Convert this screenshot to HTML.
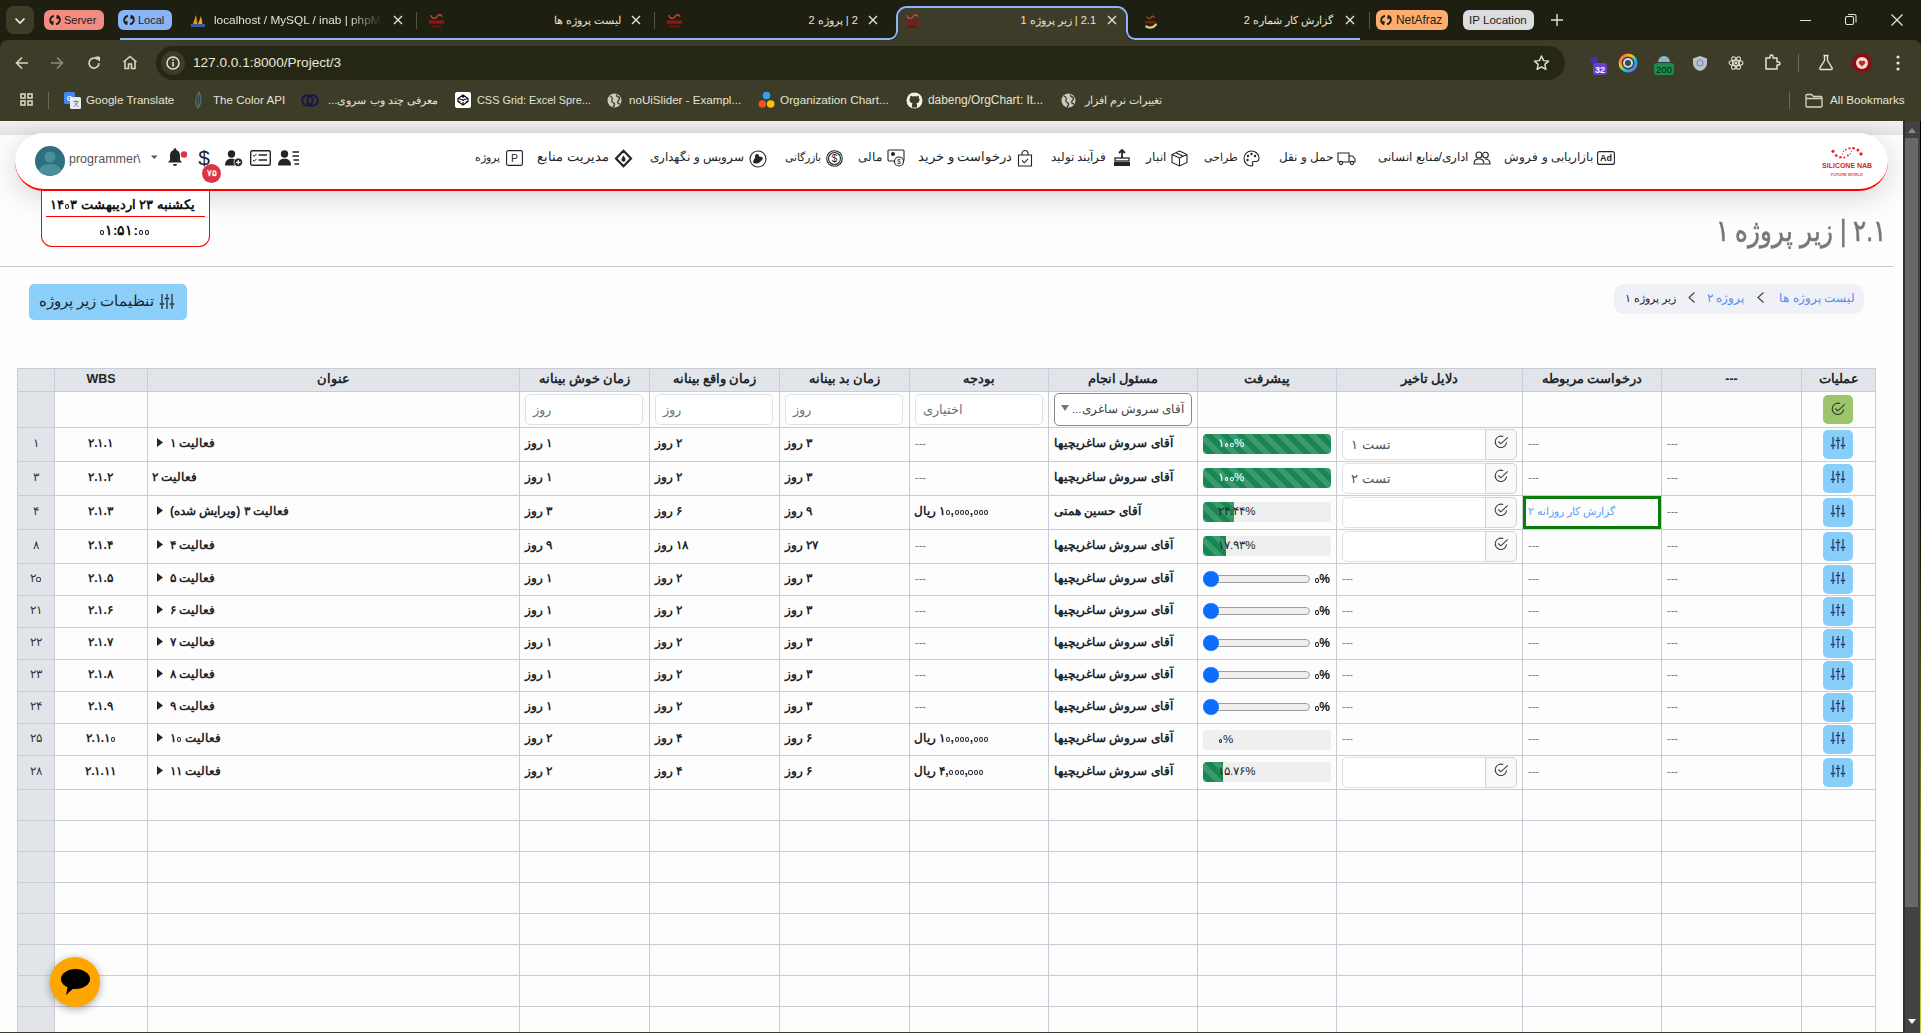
<!DOCTYPE html><html><head><meta charset="utf-8"><style>
*{box-sizing:border-box;margin:0;padding:0}
html,body{width:1921px;height:1033px;overflow:hidden;background:#fdfdfd;font-family:"Liberation Sans",sans-serif;position:relative}
.ab{position:absolute}
.t{position:absolute;white-space:nowrap;line-height:1}
.rtl{direction:rtl;unicode-bidi:plaintext}
svg{position:absolute;overflow:visible}
</style></head><body>
<div class="ab" style="left:0px;top:0px;width:1921px;height:48px;background:#1f1f11"></div>
<div class="ab" style="left:6px;top:6px;width:28px;height:28px;background:#3c3c29;border-radius:8px"></div>
<svg style="left:14px;top:17px" width="12" height="8"><path d="M1.5 1.5L6 6L10.5 1.5" fill="none" stroke="#f0f0e0" stroke-width="1.6"/></svg>
<div class="ab" style="left:44px;top:10px;width:60px;height:20px;background:#f28b82;border-radius:6px"></div>
<svg style="left:49px;top:14px" width="12" height="12"><path d="M5 1.8A4.5 4.5 0 0 0 3.2 10M7 10.2A4.5 4.5 0 0 0 8.8 2" fill="none" stroke="#1f1f11" stroke-width="1.8"/><path d="M1.5 8.2L3.8 10.8L4.2 7.5Z M10.5 3.8L8.2 1.2L7.8 4.5Z" fill="#1f1f11" stroke="#1f1f11" stroke-width="1"/></svg>
<div class="ab" style="left:64px;top:10px;height:20px;line-height:20px;font-size:11px;color:#1f1f11;white-space:nowrap;"><span>Server</span></div>
<div class="ab" style="left:118px;top:10px;width:54px;height:20px;background:#8ab4f8;border-radius:6px"></div>
<svg style="left:123px;top:14px" width="12" height="12"><path d="M5 1.8A4.5 4.5 0 0 0 3.2 10M7 10.2A4.5 4.5 0 0 0 8.8 2" fill="none" stroke="#1f1f11" stroke-width="1.8"/><path d="M1.5 8.2L3.8 10.8L4.2 7.5Z M10.5 3.8L8.2 1.2L7.8 4.5Z" fill="#1f1f11" stroke="#1f1f11" stroke-width="1"/></svg>
<div class="ab" style="left:138px;top:10px;height:20px;line-height:20px;font-size:11px;color:#1f1f11;white-space:nowrap;"><span>Local</span></div>
<div class="ab" style="left:120px;top:38px;width:770px;height:2px;background:#8ab4f8"></div>
<svg style="left:190px;top:13px" width="16" height="15"><path d="M2 14L6 2L8 14Z" fill="#f29111"/><path d="M7 14L11 3L13 14Z" fill="#f6a623"/><path d="M1 11H15V14H1Z" fill="#3b5a9c"/></svg>
<div class="ab" style="left:214px;top:10px;width:168px;height:20px;overflow:hidden;-webkit-mask-image:linear-gradient(90deg,#000 80%,transparent)"><div style="font-size:11.8px;line-height:20px;color:#e4e4d4;white-space:nowrap">localhost / MySQL / inab | phpMyAdmin</div></div>
<svg style="left:393px;top:15px" width="10" height="10"><path d="M1 1L9 9M9 1L1 9" stroke="#e4e4d4" stroke-width="1.4"/></svg>
<div class="ab" style="left:416px;top:12px;width:1px;height:17px;background:#55553f"></div>
<svg style="left:427px;top:11px" width="18" height="18"><path d="M3.8 4.2C4.5 7.5 8 8.5 9.8 5.8C11.2 3.5 13.5 2.5 15.2 5.8" fill="none" stroke="#c24a3a" stroke-width="1.4"/><rect x="1.8" y="9.4" width="15.4" height="3.3" fill="#8e1515"/><rect x="4.5" y="14.6" width="10" height="2" fill="#6e1212"/></svg>
<div class="ab" style="right:1300px;top:10px;height:20px;line-height:20px;font-size:11.2px;color:#e4e4d4;white-space:nowrap;direction:rtl;">لیست پروژه ها</div>
<svg style="left:631px;top:15px" width="10" height="10"><path d="M1 1L9 9M9 1L1 9" stroke="#e4e4d4" stroke-width="1.4"/></svg>
<div class="ab" style="left:654px;top:12px;width:1px;height:17px;background:#55553f"></div>
<svg style="left:665px;top:11px" width="18" height="18"><path d="M3.8 4.2C4.5 7.5 8 8.5 9.8 5.8C11.2 3.5 13.5 2.5 15.2 5.8" fill="none" stroke="#c24a3a" stroke-width="1.4"/><rect x="1.8" y="9.4" width="15.4" height="3.3" fill="#8e1515"/><rect x="4.5" y="14.6" width="10" height="2" fill="#6e1212"/></svg>
<div class="ab" style="right:1063px;top:10px;height:20px;line-height:20px;font-size:11.1px;color:#e4e4d4;white-space:nowrap;direction:rtl;">2 | پروژه 2</div>
<svg style="left:868px;top:15px" width="10" height="10"><path d="M1 1L9 9M9 1L1 9" stroke="#e4e4d4" stroke-width="1.4"/></svg>
<svg style="left:860px;top:0" width="520" height="48"><path d="M29 48V40H37A8 8 0 0 0 37 40Z" fill="none"/><path d="M20 39H29A8 8 0 0 0 37 31V17A10 10 0 0 1 47 7H257A10 10 0 0 1 267 17V31A8 8 0 0 0 275 39H500" fill="none" stroke="#8ab4f8" stroke-width="2"/><path d="M38 17A9 9 0 0 1 47 8H257A9 9 0 0 1 266 17V32A8 8 0 0 0 274 40H30A8 8 0 0 0 38 32Z" fill="#3c3c29"/></svg>
<svg style="left:903px;top:11px" width="18" height="18"><path d="M3.8 4.2C4.5 7.5 8 8.5 9.8 5.8C11.2 3.5 13.5 2.5 15.2 5.8" fill="none" stroke="#c24a3a" stroke-width="1.4"/><rect x="1.8" y="9.4" width="15.4" height="3.3" fill="#8e1515"/><rect x="4.5" y="14.6" width="10" height="2" fill="#6e1212"/></svg>
<div class="ab" style="right:825px;top:10px;height:20px;line-height:20px;font-size:11px;color:#e4e4d4;white-space:nowrap;direction:rtl;">2.1 | زیر پروژه 1</div>
<svg style="left:1107px;top:15px" width="10" height="10"><path d="M1 1L9 9M9 1L1 9" stroke="#e4e4d4" stroke-width="1.4"/></svg>
<svg style="left:1144px;top:13px" width="14" height="16"><path d="M3 3.5C3.5 6 6 6.5 7 4.5C8 2.5 9.5 2.5 10.5 5" fill="none" stroke="#a8503a" stroke-width="1.2"/><rect x="1" y="8" width="10" height="2.5" fill="#8e1515"/><path d="M2.3 13.5C5 15 9 15 12 11.5" fill="none" stroke="#cfd47a" stroke-width="2.2" stroke-linecap="round"/></svg>
<div class="ab" style="right:588px;top:10px;height:20px;line-height:20px;font-size:10.9px;color:#e4e4d4;white-space:nowrap;direction:rtl;">گزارش کار شماره 2</div>
<svg style="left:1345px;top:15px" width="10" height="10"><path d="M1 1L9 9M9 1L1 9" stroke="#e4e4d4" stroke-width="1.4"/></svg>
<div class="ab" style="left:1369px;top:12px;width:1px;height:17px;background:#55553f"></div>
<div class="ab" style="left:1376px;top:10px;width:72px;height:20px;background:#fcad70;border-radius:6px"></div>
<svg style="left:1380px;top:14px" width="12" height="12"><path d="M5 1.8A4.5 4.5 0 0 0 3.2 10M7 10.2A4.5 4.5 0 0 0 8.8 2" fill="none" stroke="#1f1f11" stroke-width="1.8"/><path d="M1.5 8.2L3.8 10.8L4.2 7.5Z M10.5 3.8L8.2 1.2L7.8 4.5Z" fill="#1f1f11" stroke="#1f1f11" stroke-width="1"/></svg>
<div class="ab" style="left:1396px;top:10px;height:20px;line-height:20px;font-size:11.9px;color:#1f1f11;white-space:nowrap;"><span>NetAfraz</span></div>
<div class="ab" style="left:1463px;top:10px;width:71px;height:20px;background:#dadce0;border-radius:6px"></div>
<div class="ab" style="left:1469px;top:10px;height:20px;line-height:20px;font-size:11.6px;color:#1f1f11;white-space:nowrap;"><span>IP Location</span></div>
<svg style="left:1551px;top:14px" width="12" height="12"><path d="M6 0V12M0 6H12" stroke="#e4e4d4" stroke-width="1.4"/></svg>
<div class="ab" style="left:1800px;top:20px;width:11px;height:1px;background:#e4e4d4"></div>
<svg style="left:1845px;top:14px" width="12" height="12"><rect x="0.5" y="2.5" width="8" height="8" rx="1.5" fill="none" stroke="#e4e4d4" stroke-width="1.1"/><path d="M3 0.5H9.5A1.5 1.5 0 0 1 11 2V8.5" fill="none" stroke="#e4e4d4" stroke-width="1.1"/></svg>
<svg style="left:1891px;top:14px" width="12" height="12"><path d="M0.5 0.5L11.5 11.5M11.5 0.5L0.5 11.5" stroke="#e4e4d4" stroke-width="1.3"/></svg>
<div class="ab" style="left:0px;top:40px;width:1921px;height:81px;background:#3c3c29;border-radius:8px 8px 0 0"></div>
<svg style="left:15px;top:56px" width="14" height="14"><path d="M13 7H2M7 1.5L1.5 7L7 12.5" fill="none" stroke="#d6d6c0" stroke-width="1.6"/></svg>
<svg style="left:50px;top:56px" width="14" height="14"><path d="M1 7H12M7 1.5L12.5 7L7 12.5" fill="none" stroke="#8c8c78" stroke-width="1.6"/></svg>
<svg style="left:87px;top:56px" width="14" height="14"><path d="M12 7A5 5 0 1 1 10.3 3.3" fill="none" stroke="#d6d6c0" stroke-width="1.6"/><path d="M8.5 1H12.5V5Z" fill="#d6d6c0" stroke="#d6d6c0" stroke-width="1"/></svg>
<svg style="left:122px;top:55px" width="16" height="15"><path d="M1.5 7L8 1.5L14.5 7M3 6V13.5H6.5V9H9.5V13.5H13V6" fill="none" stroke="#d6d6c0" stroke-width="1.6"/></svg>
<div class="ab" style="left:156px;top:46px;width:1409px;height:34px;background:#262615;border-radius:17px"></div>
<div class="ab" style="left:161px;top:51px;width:24px;height:24px;border-radius:12px;background:#3c3c29"></div>
<svg style="left:166px;top:56px" width="14" height="14"><circle cx="7" cy="7" r="6" fill="none" stroke="#e4e4d4" stroke-width="1.5"/><path d="M7 6V10.5" stroke="#e4e4d4" stroke-width="1.6"/><circle cx="7" cy="4" r="0.9" fill="#e4e4d4"/></svg>
<div class="ab" style="left:193px;top:53px;height:20px;line-height:20px;font-size:13.6px;color:#e8e8d8;white-space:nowrap;"><span>127.0.0.1:8000/Project/3</span></div>
<svg style="left:1533px;top:55px" width="17" height="16"><path d="M8.5 1L10.6 5.6L15.6 6.1L11.8 9.4L12.9 14.4L8.5 11.8L4.1 14.4L5.2 9.4L1.4 6.1L6.4 5.6Z" fill="none" stroke="#e4e4d4" stroke-width="1.4" stroke-linejoin="round"/></svg>
<svg style="left:1587px;top:55px" width="20" height="22"><path d="M2 6L8 1L12 6L8 10Z" fill="#4b2fa8"/><rect x="6" y="8" width="14" height="12" rx="3" fill="#6b3fd0"/><text x="13" y="18" font-size="9" font-family="Liberation Sans" font-weight="bold" fill="#fff" text-anchor="middle">32</text></svg>
<svg style="left:1619px;top:54px" width="18" height="18"><circle cx="9" cy="9" r="8" fill="none" stroke="url(#rb)" stroke-width="3"/><defs><linearGradient id="rb" x1="0" y1="0" x2="1" y2="1"><stop offset="0" stop-color="#ff3d7f"/><stop offset=".35" stop-color="#ffc107"/><stop offset=".65" stop-color="#00c3ff"/><stop offset="1" stop-color="#a24bff"/></linearGradient></defs><circle cx="9" cy="9" r="5" fill="#cfd8dc"/><circle cx="9" cy="9" r="3" fill="#37474f"/></svg>
<svg style="left:1653px;top:54px" width="22" height="22"><path d="M5 8A6 6 0 0 1 17 8Z" fill="#7bbcd0"/><rect x="1" y="9" width="20" height="12" rx="3" fill="#1d8a4a"/><text x="11" y="19" font-size="9.5" font-family="Liberation Sans" fill="#0b2414" text-anchor="middle">200</text></svg>
<svg style="left:1692px;top:55px" width="16" height="17"><path d="M8 1L15 3.5V8C15 12 12 15 8 16C4 15 1 12 1 8V3.5Z" fill="#b9c3cf"/><circle cx="8" cy="8" r="3" fill="none" stroke="#7c8ea0" stroke-width="1.2"/></svg>
<svg style="left:1728px;top:55px" width="16" height="16"><g fill="none" stroke="#e4e4d4" stroke-width="1.1"><ellipse cx="8" cy="8" rx="7" ry="2.7"/><ellipse cx="8" cy="8" rx="7" ry="2.7" transform="rotate(60 8 8)"/><ellipse cx="8" cy="8" rx="7" ry="2.7" transform="rotate(120 8 8)"/></g><circle cx="8" cy="8" r="1.4" fill="#e4e4d4"/></svg>
<svg style="left:1764px;top:54px" width="17" height="17"><path d="M2 4H6V2.5A1.5 1.5 0 0 1 9 2.5V4H13V8H14.5A1.5 1.5 0 0 1 14.5 11H13V15H2Z" fill="none" stroke="#e4e4d4" stroke-width="1.5" stroke-linejoin="round"/></svg>
<div class="ab" style="left:1798px;top:54px;width:1px;height:18px;background:#6a6a55"></div>
<svg style="left:1818px;top:54px" width="16" height="17"><path d="M5.5 1.5H10.5M6.5 1.5V6.5L1.8 14.2A1 1 0 0 0 2.7 15.5H13.3A1 1 0 0 0 14.2 14.2L9.5 6.5V1.5" fill="none" stroke="#e4e4d4" stroke-width="1.4" stroke-linejoin="round"/></svg>
<div class="ab" style="left:1852px;top:53px;width:20px;height:20px;border-radius:50%;background:#8a1010"></div>
<div class="ab" style="left:1856px;top:57px;width:12px;height:12px;border-radius:50%;background:#f4dada"></div>
<svg style="left:1858px;top:60px" width="8" height="7"><path d="M4 6.5L1 3.5A1.6 1.6 0 0 1 4 1.5A1.6 1.6 0 0 1 7 3.5Z" fill="#c62828"/></svg>
<svg style="left:1896px;top:55px" width="4" height="16"><circle cx="2" cy="2" r="1.6" fill="#e4e4d4"/><circle cx="2" cy="8" r="1.6" fill="#e4e4d4"/><circle cx="2" cy="14" r="1.6" fill="#e4e4d4"/></svg>
<svg style="left:20px;top:93px" width="13" height="13"><g fill="none" stroke="#d6d6c0" stroke-width="1.6"><rect x="1" y="1" width="4" height="4"/><rect x="8" y="1" width="4" height="4"/><rect x="1" y="8" width="4" height="4"/><rect x="8" y="8" width="4" height="4"/></g></svg>
<div class="ab" style="left:48px;top:92px;width:1px;height:17px;background:#6a6a55"></div>
<svg style="left:64px;top:92px" width="17" height="17"><rect x="0" y="0" width="11" height="12" rx="1.5" fill="#4285f4"/><rect x="6" y="5" width="11" height="12" rx="1.5" fill="#e8eaed"/><text x="5.5" y="9" font-size="7" font-family="Liberation Sans" font-weight="bold" fill="#fff" text-anchor="middle">G</text><path d="M9.5 9.5H14.5M12 8.5V10M10 14.5C12 13 13 11.5 13.5 10M11 11C11.5 12.5 13 14 14.5 14.5" fill="none" stroke="#777" stroke-width="0.9"/></svg>
<div class="ab" style="left:86px;top:90px;height:20px;line-height:20px;font-size:11.6px;color:#e4e4d4;white-space:nowrap;"><span>Google Translate</span></div>
<svg style="left:194px;top:91px" width="10" height="18"><path d="M5 1C1 7 1 13 4 17C7 13 8 7 5 1Z" fill="none" stroke="#3f7f5a" stroke-width="1.2"/><path d="M5 1L4 17" stroke="#7b4fa0" stroke-width="0.8"/></svg>
<div class="ab" style="left:213px;top:90px;height:20px;line-height:20px;font-size:11.6px;color:#e4e4d4;white-space:nowrap;"><span>The Color API</span></div>
<svg style="left:301px;top:92px" width="18" height="17"><circle cx="6.5" cy="8.5" r="5.2" fill="none" stroke="#18154a" stroke-width="2"/><circle cx="11.5" cy="8.5" r="5.2" fill="none" stroke="#18154a" stroke-width="2"/></svg>
<div class="ab" style="right:1483px;top:90px;height:20px;line-height:20px;font-size:11.4px;color:#e4e4d4;white-space:nowrap;direction:rtl;">معرفی چند وب سروی...</div>
<div class="ab" style="left:455px;top:92px;width:16px;height:16px;background:#fff;border-radius:2px"></div>
<svg style="left:457px;top:94px" width="12" height="12"><path d="M6 1L11 4.5V7.5L6 11L1 7.5V4.5Z M1 4.5L11 7.5 M11 4.5L1 7.5 M6 1V4 M6 8V11" fill="none" stroke="#111" stroke-width="1.2"/></svg>
<div class="ab" style="left:477px;top:90px;height:20px;line-height:20px;font-size:10.9px;color:#e4e4d4;white-space:nowrap;"><span>CSS Grid: Excel Spre...</span></div>
<svg style="left:607px;top:93px" width="15" height="15"><circle cx="7.5" cy="7.5" r="7" fill="#c9c9c0"/><path d="M3 3C5 4 6 5 5 7C4 8 6 10 7 10C8 11 7 13 6 14M10 1.5C9 3 10 4 12 4C13 5 12 7 11 8C10 9 11 11 13 11" fill="none" stroke="#3c3c29" stroke-width="1.3"/></svg>
<div class="ab" style="left:629px;top:90px;height:20px;line-height:20px;font-size:11.6px;color:#e4e4d4;white-space:nowrap;"><span>noUiSlider - Exampl...</span></div>
<svg style="left:758px;top:91px" width="17" height="18"><circle cx="8.5" cy="4.5" r="3.8" fill="#2aa4f4"/><circle cx="4.3" cy="13" r="3.8" fill="#f4511e"/><circle cx="12.7" cy="13" r="3.8" fill="#ffc107"/></svg>
<div class="ab" style="left:780px;top:90px;height:20px;line-height:20px;font-size:11.8px;color:#e4e4d4;white-space:nowrap;"><span>Organization Chart...</span></div>
<svg style="left:906px;top:92px" width="17" height="17"><circle cx="8.5" cy="8.5" r="8" fill="#f0f0e8"/><path d="M6 15.5V12.8C6 12 6.3 11.5 6.6 11.2C4.5 11 3.5 9.8 3.5 7.8C3.5 7 3.8 6.3 4.3 5.8C4.1 5.2 4.1 4.5 4.4 3.8C5.1 3.8 5.8 4.1 6.5 4.6C7.8 4.2 9.2 4.2 10.5 4.6C11.2 4.1 11.9 3.8 12.6 3.8C12.9 4.5 12.9 5.2 12.7 5.8C13.2 6.3 13.5 7 13.5 7.8C13.5 9.8 12.5 11 10.4 11.2C10.8 11.6 11 12.2 11 12.9V15.5Z" fill="#3c3c29"/></svg>
<div class="ab" style="left:928px;top:90px;height:20px;line-height:20px;font-size:11.9px;color:#e4e4d4;white-space:nowrap;"><span>dabeng/OrgChart: It...</span></div>
<svg style="left:1061px;top:93px" width="15" height="15"><circle cx="7.5" cy="7.5" r="7" fill="#c9c9c0"/><path d="M3 3C5 4 6 5 5 7C4 8 6 10 7 10C8 11 7 13 6 14M10 1.5C9 3 10 4 12 4C13 5 12 7 11 8C10 9 11 11 13 11" fill="none" stroke="#3c3c29" stroke-width="1.3"/></svg>
<div class="ab" style="right:759px;top:90px;height:20px;line-height:20px;font-size:11px;color:#e4e4d4;white-space:nowrap;direction:rtl;">تغییرات نرم افزار</div>
<div class="ab" style="left:1789px;top:92px;width:1px;height:17px;background:#6a6a55"></div>
<svg style="left:1805px;top:93px" width="18" height="15"><path d="M1 2.5A1 1 0 0 1 2 1.5H6.5L8.5 3.5H16A1 1 0 0 1 17 4.5V13A1 1 0 0 1 16 14H2A1 1 0 0 1 1 13Z M1 5.5H17" fill="none" stroke="#d6d6c0" stroke-width="1.3"/></svg>
<div class="ab" style="left:1830px;top:90px;height:20px;line-height:20px;font-size:11.7px;color:#e4e4d4;white-space:nowrap;"><span>All Bookmarks</span></div>
<div class="ab" style="left:0;top:121px;width:1903px;height:14px;background:linear-gradient(#f1f1f1,#e3e3e3)"></div>
<div class="ab" style="left:15px;top:133px;width:1873px;height:58px;background:#fff;border-radius:30px;border-bottom:2px solid #f00;box-shadow:0 6px 28px rgba(0,0,0,.16)"></div>
<svg style="left:1818px;top:140px" width="58" height="40"><g fill="#e0262b"><circle cx="15.0" cy="11.3" r="1.6"/><circle cx="18.2" cy="15.6" r="1.4"/><circle cx="22.3" cy="17.2" r="1.2"/><circle cx="26.4" cy="17.4" r="1.0"/><circle cx="29.9" cy="15.6" r="1.0"/><circle cx="32.2" cy="13.7" r="0.7"/><circle cx="33.4" cy="11.3" r="0.6"/><circle cx="24.4" cy="14.0" r="0.6"/><circle cx="25.6" cy="11.3" r="0.7"/><circle cx="27.9" cy="9.6" r="0.9"/><circle cx="31.5" cy="8.4" r="1.1"/><circle cx="35.6" cy="8.2" r="1.3"/><circle cx="39.9" cy="10.0" r="1.5"/><circle cx="43.0" cy="13.9" r="1.7"/></g><text x="4.1" y="28" textLength="50" lengthAdjust="spacingAndGlyphs" font-family="Liberation Sans" font-weight="bold" font-size="6.9" fill="#d9232a">SILICONE NAB</text><text x="13" y="35.7" textLength="31.7" lengthAdjust="spacingAndGlyphs" font-family="Liberation Sans" font-weight="bold" font-size="4.4" fill="#e04a4f">FUTURE WORLD</text></svg>
<div class="ab" style="right:328px;top:147px;height:20px;line-height:20px;font-size:11.8px;color:#212529;font-weight:normal;white-space:nowrap;direction:rtl;">بازاریابی و فروش</div>
<div class="ab" style="right:453px;top:147px;height:20px;line-height:20px;font-size:12.3px;color:#212529;font-weight:normal;white-space:nowrap;direction:rtl;">اداری/منابع انسانی</div>
<div class="ab" style="right:588px;top:147px;height:20px;line-height:20px;font-size:12.2px;color:#212529;font-weight:normal;white-space:nowrap;direction:rtl;">حمل و نقل</div>
<div class="ab" style="right:683px;top:147px;height:20px;line-height:20px;font-size:11.4px;color:#212529;font-weight:normal;white-space:nowrap;direction:rtl;">طراحی</div>
<div class="ab" style="right:755px;top:147px;height:20px;line-height:20px;font-size:11.8px;color:#212529;font-weight:normal;white-space:nowrap;direction:rtl;">انبار</div>
<div class="ab" style="right:815px;top:147px;height:20px;line-height:20px;font-size:12px;color:#212529;font-weight:normal;white-space:nowrap;direction:rtl;">فرآیند تولید</div>
<div class="ab" style="right:909px;top:147px;height:20px;line-height:20px;font-size:12.5px;color:#212529;font-weight:normal;white-space:nowrap;direction:rtl;">درخواست و خرید</div>
<div class="ab" style="right:1039px;top:147px;height:20px;line-height:20px;font-size:11.5px;color:#212529;font-weight:normal;white-space:nowrap;direction:rtl;">مالی</div>
<div class="ab" style="right:1100px;top:147px;height:20px;line-height:20px;font-size:11px;color:#212529;font-weight:normal;white-space:nowrap;direction:rtl;">بازرگانی</div>
<div class="ab" style="right:1177px;top:147px;height:20px;line-height:20px;font-size:12.2px;color:#212529;font-weight:normal;white-space:nowrap;direction:rtl;">سرویس و نگهداری</div>
<div class="ab" style="right:1312px;top:147px;height:20px;line-height:20px;font-size:12.9px;color:#212529;font-weight:normal;white-space:nowrap;direction:rtl;">مدیریت منابع</div>
<div class="ab" style="right:1421px;top:147px;height:20px;line-height:20px;font-size:10.8px;color:#212529;font-weight:normal;white-space:nowrap;direction:rtl;">پروژه</div>
<svg style="left:1597px;top:151px" width="18" height="14"><rect x="0.6" y="0.6" width="16.8" height="12.8" rx="2" fill="none" stroke="#212529" stroke-width="1.1"/><text x="9" y="10.3" font-family="Liberation Sans" font-size="9" font-weight="bold" fill="#212529" text-anchor="middle">Ad</text></svg>
<svg style="left:1473px;top:151px" width="18" height="14"><circle cx="6" cy="4" r="3" fill="none" stroke="#212529" stroke-width="1.1"/><path d="M1 13C1 9 3 8 6 8C9 8 11 9 11 13Z" fill="none" stroke="#212529" stroke-width="1.1"/><circle cx="12.5" cy="4" r="2.8" fill="none" stroke="#212529" stroke-width="1.1"/><path d="M12 8C15 8 17 9 17 13H12" fill="none" stroke="#212529" stroke-width="1.1"/></svg>
<svg style="left:1337px;top:151px" width="19" height="14"><path d="M1 2H12V11H1Z M12 5H15.5L18 8V11H12" fill="none" stroke="#212529" stroke-width="1.1"/><circle cx="4" cy="12" r="1.6" fill="#fff" stroke="#212529" stroke-width="1.1"/><circle cx="15" cy="12" r="1.6" fill="#fff" stroke="#212529" stroke-width="1.1"/></svg>
<svg style="left:1243px;top:150px" width="17" height="17"><path d="M8.5 1A7.5 7.5 0 1 0 8.5 16C10 16 10 14.5 9.5 13.5C9 12.5 9.5 11.5 11 11.5H13C15 11.5 16 10 16 8A7.5 7.5 0 0 0 8.5 1Z" fill="none" stroke="#212529" stroke-width="1.1"/><circle cx="5" cy="6" r="1.2" fill="#212529"/><circle cx="8.5" cy="4" r="1.2" fill="#212529"/><circle cx="12" cy="6" r="1.2" fill="#212529"/><circle cx="4.5" cy="10" r="1.2" fill="#212529"/></svg>
<svg style="left:1171px;top:150px" width="17" height="17"><path d="M8.5 1L16 4.5V12.5L8.5 16L1 12.5V4.5Z M1 4.5L8.5 8L16 4.5 M8.5 8V16 M4.8 2.8L12.3 6.3" fill="none" stroke="#212529" stroke-width="1.1"/></svg>
<svg style="left:1113px;top:149px" width="18" height="18"><path d="M9 1V9M6 4L9 1L12 4" fill="none" stroke="#212529" stroke-width="1.8"/><rect x="2" y="9" width="14" height="3" fill="none" stroke="#212529" stroke-width="1.3"/><rect x="1" y="13" width="16" height="4" fill="#212529"/></svg>
<svg style="left:1017px;top:150px" width="16" height="17"><path d="M1.5 5H14.5V16H1.5Z M5 5V3.5A3 3 0 0 1 11 3.5V5 M5 10.5L7.3 12.8L11 8.8" fill="none" stroke="#212529" stroke-width="1.1"/></svg>
<svg style="left:887px;top:149px" width="18" height="18"><rect x="1" y="1" width="16" height="11" rx="1" fill="none" stroke="#212529" stroke-width="1.1"/><circle cx="6" cy="5" r="2" fill="#212529"/><circle cx="12" cy="12.5" r="4.5" fill="#fff" stroke="#212529" stroke-width="1.1"/><text x="12" y="15.2" font-family="Liberation Sans" font-size="7" fill="#212529" text-anchor="middle">$</text></svg>
<svg style="left:826px;top:150px" width="17" height="17"><circle cx="8.5" cy="8.5" r="7.8" fill="none" stroke="#212529" stroke-width="1.1"/><circle cx="8.5" cy="8.5" r="6" fill="none" stroke="#212529" stroke-width="1.1"/><text x="8.5" y="12.3" font-family="Liberation Sans" font-size="10" fill="#212529" text-anchor="middle">$</text></svg>
<svg style="left:749px;top:150px" width="18" height="18"><circle cx="9" cy="9" r="8" fill="none" stroke="#212529" stroke-width="1.1"/><path d="M4 12C5 8 7 6 9 6C10 6 11 7 13 7C14 7 14 9 13 10L11 12C9 14 5 14 4 12Z" fill="#212529"/><circle cx="8" cy="6" r="2" fill="#212529"/></svg>
<svg style="left:615px;top:150px" width="17" height="17"><path d="M10 2.2L8.5 0.8L1 8.5L8.5 16.2L10 14.7M7 2.2L8.5 0.8M7 14.7L8.5 16.2M10 2.2L16 8.5L10 14.8M7 2.2L1 8.5" fill="none" stroke="#212529" stroke-width="2.2"/><path d="M8.5 5.5C9.8 7.5 10.5 8.5 10.5 9.8A2 2 0 0 1 6.5 9.8C6.5 8.5 7.2 7.5 8.5 5.5Z" fill="#212529"/></svg>
<svg style="left:506px;top:150px" width="17" height="16"><rect x="0.6" y="0.6" width="15.8" height="14.8" rx="1.5" fill="none" stroke="#212529" stroke-width="1.1"/><text x="8.5" y="12" font-family="Liberation Sans" font-size="10.5" fill="#212529" text-anchor="middle">P</text></svg>
<svg style="left:278px;top:150px" width="22" height="16"><circle cx="6.5" cy="4" r="3.7" fill="#212529"/><path d="M0 15.5C0 10.5 3 8.8 6.5 8.8C10 8.8 13 10.5 13 15.5Z" fill="#212529"/><path d="M14.5 2H21M14.5 6H21M15.5 10H21M16.5 14H21" stroke="#212529" stroke-width="1.4"/></svg>
<svg style="left:250px;top:150px" width="21" height="16"><rect x="0.7" y="0.7" width="19.6" height="14.6" rx="1.5" fill="none" stroke="#212529" stroke-width="1.4"/><path d="M8.5 5H17M8.5 10H17" stroke="#212529" stroke-width="1.4"/><path d="M3 5L4.3 6.3L6.5 3.8M3 10L4.3 11.3L6.5 8.8" fill="none" stroke="#212529" stroke-width="1"/></svg>
<svg style="left:225px;top:150px" width="18" height="17"><circle cx="6.5" cy="4" r="3.7" fill="#212529"/><path d="M0 15.5C0 10.5 3 8.8 6.5 8.8C8 8.8 9.5 9.2 10.5 10L10 15.5Z" fill="#212529"/><circle cx="13.3" cy="12.3" r="4.3" fill="#212529" stroke="#fff" stroke-width="0.8"/><path d="M13.3 10V14.6M11 12.3H15.6" stroke="#fff" stroke-width="1.2"/></svg>
<svg style="left:197px;top:148px" width="15" height="20"><text x="7" y="17" font-family="Liberation Sans" font-size="21" fill="#212529" text-anchor="middle">$</text></svg>
<div class="ab" style="left:202px;top:164px;width:19px;height:19px;border-radius:50%;background:#dc3545"></div>
<div class="ab" style="left:202px;top:164px;width:19px;height:19px;line-height:19px;text-align:center;font-size:9px;font-weight:bold;color:#fff"><span dir="rtl"><span dir="ltr" style="unicode-bidi:isolate">۷۵</span></span></div>
<svg style="left:167px;top:148px" width="22" height="19"><path d="M8 2C4.5 2 3 4.5 3 8V12L1 14.5H15L13 12V8C13 4.5 11.5 2 8 2Z" fill="#212529"/><circle cx="8" cy="1.5" r="1.3" fill="#212529"/><path d="M6 16A2 2 0 0 0 10 16Z" fill="#212529"/><circle cx="17" cy="6.5" r="3.2" fill="#dc3545"/></svg>
<svg style="left:151px;top:155px" width="7" height="5"><path d="M0 0.5H6.5L3.25 4Z" fill="#555"/></svg>
<div class="ab" style="left:69px;top:149px;width:75px;height:20px;overflow:hidden;line-height:20px;font-size:12.5px;color:#555;white-space:nowrap">programmer\</div>
<svg style="left:35px;top:146px" width="30" height="30"><defs><clipPath id="av"><circle cx="15" cy="15" r="15"/></clipPath></defs><circle cx="15" cy="15" r="15" fill="#2e6f7e"/><g clip-path="url(#av)" fill="#4a8f9c"><circle cx="15" cy="11" r="5.5"/><path d="M3 30C3 21 8 18 15 18C22 18 27 21 27 30Z"/></g></svg>
<div class="ab" style="left:41px;top:191px;width:169px;height:56px;border:1.5px solid #f00;border-top:none;border-radius:0 0 11px 11px;background:#fff"></div>
<div class="ab" style="left:46px;top:216px;width:159px;height:1px;background:#f00"></div>
<div class="ab" style="left:50px;top:195px;height:20px;line-height:20px;font-size:13.4px;color:#111;font-weight:bold;white-space:nowrap;"><span dir="rtl">یکشنبه <span dir="ltr" style="unicode-bidi:isolate">۲۳</span> اردیبهشت <span dir="ltr" style="unicode-bidi:isolate">۱۴<span style="display:inline-block;width:.34em;height:.39em;border:.105em solid currentColor;border-radius:50%;margin:0 .05em"></span>۳</span></span></div>
<div class="ab" style="left:99px;top:221px;height:20px;line-height:20px;font-size:13.6px;color:#111;font-weight:bold;white-space:nowrap;"><span dir="rtl"><span dir="ltr" style="unicode-bidi:isolate"><span style="display:inline-block;width:.34em;height:.39em;border:.105em solid currentColor;border-radius:50%;margin:0 .05em"></span>۱:۵۱:<span style="display:inline-block;width:.34em;height:.39em;border:.105em solid currentColor;border-radius:50%;margin:0 .05em"></span><span style="display:inline-block;width:.34em;height:.39em;border:.105em solid currentColor;border-radius:50%;margin:0 .05em"></span></span></span></div>
<div class="ab" style="right:35px;top:212px;height:40px;line-height:40px;font-size:24.5px;color:#777;font-weight:normal;white-space:nowrap;direction:rtl;transform:scaleY(1.22);transform-origin:50% 62%;-webkit-text-stroke:0.5px #777"><span dir="ltr" style="unicode-bidi:isolate">۲.۱</span> | زیر پروژه <span dir="ltr" style="unicode-bidi:isolate">۱</span></div>
<div class="ab" style="left:0px;top:266px;width:1893px;height:1px;background:#c6c8cc"></div>
<div class="ab" style="left:1614px;top:284px;width:250px;height:30px;border-radius:10px;background:#f0f1f6"></div>
<div class="ab" style="right:66px;top:288px;height:20px;line-height:20px;font-size:12.4px;color:#4f8ff7;font-weight:normal;white-space:nowrap;direction:rtl;">لیست پروژه ها</div>
<div class="ab" style="right:177px;top:288px;height:20px;line-height:20px;font-size:11.5px;color:#4f8ff7;font-weight:normal;white-space:nowrap;direction:rtl;">پروژه <span dir="ltr" style="unicode-bidi:isolate">۲</span></div>
<div class="ab" style="right:245px;top:288px;height:20px;line-height:20px;font-size:11px;color:#212529;font-weight:normal;white-space:nowrap;direction:rtl;">زیر پروژه <span dir="ltr" style="unicode-bidi:isolate">۱</span></div>
<svg style="left:1757px;top:292px" width="8" height="12"><path d="M6.5 0.5L1 5.5L6.5 10.5" fill="none" stroke="#3a3a3a" stroke-width="1.05"/></svg>
<svg style="left:1688px;top:292px" width="8" height="12"><path d="M6.5 0.5L1 5.5L6.5 10.5" fill="none" stroke="#3a3a3a" stroke-width="1.05"/></svg>
<div class="ab" style="left:29px;top:284px;width:158px;height:36px;border-radius:5px;background:#8ccffb"></div>
<div class="ab" style="right:1767px;top:291px;height:20px;line-height:20px;font-size:15px;color:#212529;font-weight:normal;white-space:nowrap;direction:rtl;">تنظیمات زیر پروژه</div>
<svg style="left:159px;top:294px" width="16" height="15"><g stroke="#212529" stroke-width="1.2" fill="none"><path d="M3 0V9M3 11V15M8 0V3.5M8 5.5V15M13 0V9M13 11V15"/><path d="M0.8 10H5.2M5.8 4.5H10.2M10.8 10H15.2" stroke-width="1.6"/></g></svg>
<div class="ab" style="left:17px;top:368px;width:1859px;height:24px;background:#e1e5e9"></div>
<div class="ab" style="left:17px;top:391px;width:38px;height:660px;background:#e1e5e9"></div>
<div class="ab" style="left:17px;top:368px;width:1px;height:680px;background:#c9ccd4"></div>
<div class="ab" style="left:54px;top:368px;width:1px;height:680px;background:#c9ccd4"></div>
<div class="ab" style="left:147px;top:368px;width:1px;height:680px;background:#c9ccd4"></div>
<div class="ab" style="left:519px;top:368px;width:1px;height:680px;background:#c9ccd4"></div>
<div class="ab" style="left:649px;top:368px;width:1px;height:680px;background:#c9ccd4"></div>
<div class="ab" style="left:779px;top:368px;width:1px;height:680px;background:#c9ccd4"></div>
<div class="ab" style="left:909px;top:368px;width:1px;height:680px;background:#c9ccd4"></div>
<div class="ab" style="left:1048px;top:368px;width:1px;height:680px;background:#c9ccd4"></div>
<div class="ab" style="left:1197px;top:368px;width:1px;height:680px;background:#c9ccd4"></div>
<div class="ab" style="left:1336px;top:368px;width:1px;height:680px;background:#c9ccd4"></div>
<div class="ab" style="left:1522px;top:368px;width:1px;height:680px;background:#c9ccd4"></div>
<div class="ab" style="left:1661px;top:368px;width:1px;height:680px;background:#c9ccd4"></div>
<div class="ab" style="left:1801px;top:368px;width:1px;height:680px;background:#c9ccd4"></div>
<div class="ab" style="left:1875px;top:368px;width:1px;height:680px;background:#c9ccd4"></div>
<div class="ab" style="left:17px;top:368px;width:1859px;height:1px;background:#c9ccd4"></div>
<div class="ab" style="left:17px;top:391px;width:1859px;height:1px;background:#c9ccd4"></div>
<div class="ab" style="left:17px;top:427px;width:1859px;height:1px;background:#c9ccd4"></div>
<div class="ab" style="left:17px;top:461px;width:1859px;height:1px;background:#c9ccd4"></div>
<div class="ab" style="left:17px;top:495px;width:1859px;height:1px;background:#c9ccd4"></div>
<div class="ab" style="left:17px;top:529px;width:1859px;height:1px;background:#c9ccd4"></div>
<div class="ab" style="left:17px;top:563px;width:1859px;height:1px;background:#c9ccd4"></div>
<div class="ab" style="left:17px;top:595px;width:1859px;height:1px;background:#c9ccd4"></div>
<div class="ab" style="left:17px;top:627px;width:1859px;height:1px;background:#c9ccd4"></div>
<div class="ab" style="left:17px;top:659px;width:1859px;height:1px;background:#c9ccd4"></div>
<div class="ab" style="left:17px;top:691px;width:1859px;height:1px;background:#c9ccd4"></div>
<div class="ab" style="left:17px;top:723px;width:1859px;height:1px;background:#c9ccd4"></div>
<div class="ab" style="left:17px;top:755px;width:1859px;height:1px;background:#c9ccd4"></div>
<div class="ab" style="left:17px;top:789px;width:1859px;height:1px;background:#c9ccd4"></div>
<div class="ab" style="left:17px;top:820px;width:1859px;height:1px;background:#c9ccd4"></div>
<div class="ab" style="left:17px;top:851px;width:1859px;height:1px;background:#c9ccd4"></div>
<div class="ab" style="left:17px;top:882px;width:1859px;height:1px;background:#c9ccd4"></div>
<div class="ab" style="left:17px;top:913px;width:1859px;height:1px;background:#c9ccd4"></div>
<div class="ab" style="left:17px;top:944px;width:1859px;height:1px;background:#c9ccd4"></div>
<div class="ab" style="left:17px;top:975px;width:1859px;height:1px;background:#c9ccd4"></div>
<div class="ab" style="left:17px;top:1006px;width:1859px;height:1px;background:#c9ccd4"></div>
<div class="ab" style="left:17px;top:1037px;width:1859px;height:1px;background:#c9ccd4"></div>
<div class="ab" style="left:55px;top:368px;width:92px;height:23px;display:flex;align-items:center;justify-content:center;white-space:nowrap;font-size:12.5px;font-weight:bold;color:#212529;padding-bottom:2px"><span dir="rtl">WBS</span></div>
<div class="ab" style="left:148px;top:368px;width:371px;height:23px;display:flex;align-items:center;justify-content:center;white-space:nowrap;font-size:12.5px;font-weight:bold;color:#212529;padding-bottom:2px"><span dir="rtl">عنوان</span></div>
<div class="ab" style="left:520px;top:368px;width:129px;height:23px;display:flex;align-items:center;justify-content:center;white-space:nowrap;font-size:12.5px;font-weight:bold;color:#212529;padding-bottom:2px"><span dir="rtl">زمان خوش بینانه</span></div>
<div class="ab" style="left:650px;top:368px;width:129px;height:23px;display:flex;align-items:center;justify-content:center;white-space:nowrap;font-size:12.5px;font-weight:bold;color:#212529;padding-bottom:2px"><span dir="rtl">زمان واقع بینانه</span></div>
<div class="ab" style="left:780px;top:368px;width:129px;height:23px;display:flex;align-items:center;justify-content:center;white-space:nowrap;font-size:12.5px;font-weight:bold;color:#212529;padding-bottom:2px"><span dir="rtl">زمان بد بینانه</span></div>
<div class="ab" style="left:910px;top:368px;width:138px;height:23px;display:flex;align-items:center;justify-content:center;white-space:nowrap;font-size:12.5px;font-weight:bold;color:#212529;padding-bottom:2px"><span dir="rtl">بودجه</span></div>
<div class="ab" style="left:1049px;top:368px;width:148px;height:23px;display:flex;align-items:center;justify-content:center;white-space:nowrap;font-size:12.5px;font-weight:bold;color:#212529;padding-bottom:2px"><span dir="rtl">مسئول انجام</span></div>
<div class="ab" style="left:1198px;top:368px;width:138px;height:23px;display:flex;align-items:center;justify-content:center;white-space:nowrap;font-size:12.5px;font-weight:bold;color:#212529;padding-bottom:2px"><span dir="rtl">پیشرفت</span></div>
<div class="ab" style="left:1337px;top:368px;width:185px;height:23px;display:flex;align-items:center;justify-content:center;white-space:nowrap;font-size:12.5px;font-weight:bold;color:#212529;padding-bottom:2px"><span dir="rtl">دلایل تاخیر</span></div>
<div class="ab" style="left:1523px;top:368px;width:138px;height:23px;display:flex;align-items:center;justify-content:center;white-space:nowrap;font-size:12.5px;font-weight:bold;color:#212529;padding-bottom:2px"><span dir="rtl">درخواست مربوطه</span></div>
<div class="ab" style="left:1662px;top:368px;width:139px;height:23px;display:flex;align-items:center;justify-content:center;white-space:nowrap;font-size:12.5px;font-weight:bold;color:#212529;padding-bottom:2px"><span dir="rtl">---</span></div>
<div class="ab" style="left:1802px;top:368px;width:73px;height:23px;display:flex;align-items:center;justify-content:center;white-space:nowrap;font-size:12.5px;font-weight:bold;color:#212529;padding-bottom:2px"><span dir="rtl">عملیات</span></div>
<div class="ab" style="left:525px;top:394px;width:118px;height:31px;border:1px solid #dee2e6;border-radius:5px;background:#fff"></div>
<div class="ab" style="left:533px;top:394px;width:110px;height:31px;display:flex;align-items:center;justify-content:flex-start;white-space:nowrap;font-size:12.5px;color:#6c757d"><span dir="rtl">روز</span></div>
<div class="ab" style="left:655px;top:394px;width:118px;height:31px;border:1px solid #dee2e6;border-radius:5px;background:#fff"></div>
<div class="ab" style="left:663px;top:394px;width:110px;height:31px;display:flex;align-items:center;justify-content:flex-start;white-space:nowrap;font-size:12.5px;color:#6c757d"><span dir="rtl">روز</span></div>
<div class="ab" style="left:785px;top:394px;width:118px;height:31px;border:1px solid #dee2e6;border-radius:5px;background:#fff"></div>
<div class="ab" style="left:793px;top:394px;width:110px;height:31px;display:flex;align-items:center;justify-content:flex-start;white-space:nowrap;font-size:12.5px;color:#6c757d"><span dir="rtl">روز</span></div>
<div class="ab" style="left:915px;top:394px;width:128px;height:31px;border:1px solid #dee2e6;border-radius:5px;background:#fff"></div>
<div class="ab" style="left:923px;top:394px;width:117px;height:30px;display:flex;align-items:center;justify-content:flex-start;white-space:nowrap;font-size:13.4px;color:#6c757d"><span dir="rtl">اختیاری</span></div>
<div class="ab" style="left:1054px;top:393px;width:138px;height:33px;border:1px solid #8a8a8a;border-radius:5px;background:#fff"></div>
<div class="ab" style="left:1070px;top:393px;width:114px;height:32px;display:flex;align-items:center;justify-content:flex-end;white-space:nowrap;font-size:11.6px;color:#444"><span dir="rtl">آقای سروش ساغری...</span></div>
<svg style="left:1061px;top:405px" width="9" height="7"><path d="M0 0H8L4 6Z" fill="#777"/></svg>
<div class="ab" style="left:1823px;top:395px;width:30px;height:29px;background:#9cc46c;border-radius:5px"></div>
<svg style="left:1831px;top:402px" width="16" height="14"><path d="M9.2 1.6A5.7 5.7 0 1 0 12.6 7.3" fill="none" stroke="#2a3a2a" stroke-width="1.05"/><path d="M4.3 6.5L6.8 8.8L13.8 2.4" fill="none" stroke="#2a3a2a" stroke-width="1.1"/></svg>
<div class="ab" style="left:17px;top:427px;width:37px;height:32px;display:flex;align-items:center;justify-content:center;white-space:nowrap;font-size:12px;color:#333"><span dir="rtl"><span dir="ltr" style="unicode-bidi:isolate">۱</span></span></div>
<div class="ab" style="left:54px;top:427px;width:93px;height:32px;display:flex;align-items:center;justify-content:center;white-space:nowrap;font-size:12px;font-weight:bold;color:#212529"><span dir="rtl"><span dir="ltr" style="unicode-bidi:isolate">۲.۱.۱</span></span></div>
<svg style="left:157px;top:438px" width="7" height="10"><path d="M0 0V9L6 4.5Z" fill="#212529"/></svg>
<div class="ab" style="left:170px;top:427px;width:349px;height:32px;display:flex;align-items:center;justify-content:flex-start;white-space:nowrap;font-size:12px;font-weight:bold;color:#212529"><span dir="rtl">فعالیت <span dir="ltr" style="unicode-bidi:isolate">۱</span></span></div>
<div class="ab" style="left:525px;top:427px;width:124px;height:32px;display:flex;align-items:center;justify-content:flex-start;white-space:nowrap;font-size:12px;font-weight:bold;color:#212529"><span dir="rtl"><span dir="ltr" style="unicode-bidi:isolate">۱</span> روز</span></div>
<div class="ab" style="left:655px;top:427px;width:124px;height:32px;display:flex;align-items:center;justify-content:flex-start;white-space:nowrap;font-size:12px;font-weight:bold;color:#212529"><span dir="rtl"><span dir="ltr" style="unicode-bidi:isolate">۲</span> روز</span></div>
<div class="ab" style="left:785px;top:427px;width:124px;height:32px;display:flex;align-items:center;justify-content:flex-start;white-space:nowrap;font-size:12px;font-weight:bold;color:#212529"><span dir="rtl"><span dir="ltr" style="unicode-bidi:isolate">۳</span> روز</span></div>
<div class="ab" style="left:915px;top:427px;width:133px;height:31px;display:flex;align-items:center;justify-content:flex-start;white-space:nowrap;font-size:11px;color:#6c757d;letter-spacing:0px">---</div>
<div class="ab" style="left:1054px;top:427px;width:143px;height:32px;display:flex;align-items:center;justify-content:flex-start;white-space:nowrap;font-size:12px;font-weight:bold;color:#212529"><span dir="rtl">آقای سروش ساغریچیها</span></div>
<div class="ab" style="left:1203px;top:434px;width:128px;height:20px;background:#efefef;border-radius:4px;overflow:hidden"></div>
<div class="ab" style="left:1203px;top:434px;width:128px;height:20px;background-color:#198754;background-image:linear-gradient(45deg,rgba(255,255,255,.15) 25%,transparent 25%,transparent 50%,rgba(255,255,255,.15) 50%,rgba(255,255,255,.15) 75%,transparent 75%,transparent);background-size:16px 16px;background-position:8px 0;border-radius:4px"></div>
<div class="ab" style="left:1218px;top:433px;width:112px;height:20px;display:flex;align-items:center;justify-content:flex-start;white-space:nowrap;font-size:11.5px;font-weight:normal;color:#fff"><span dir="rtl"><span dir="ltr" style="unicode-bidi:isolate">۱<span style="display:inline-block;width:.34em;height:.39em;border:.105em solid currentColor;border-radius:50%;margin:0 .05em"></span><span style="display:inline-block;width:.34em;height:.39em;border:.105em solid currentColor;border-radius:50%;margin:0 .05em"></span>%</span></span></div>
<div class="ab" style="left:1342px;top:429px;width:175px;height:31px;border:1px solid #dee2e6;border-radius:5px;background:#fff"></div>
<div class="ab" style="left:1485px;top:429px;width:32px;height:31px;border:1px solid #d0d4d9;border-radius:0 5px 5px 0;background:#f8f9fa"></div>
<div class="ab" style="left:1494px;top:435px;width:16px;height:14px"><svg width="16" height="14" viewBox="0 0 16 14" style="position:static"><path d="M9.2 1.6A5.7 5.7 0 1 0 12.6 7.3" fill="none" stroke="#3a3a3a" stroke-width="1.05"/><path d="M4.3 6.5L6.8 8.8L13.8 2.4" fill="none" stroke="#3a3a3a" stroke-width="1.1"/></svg></div>
<div class="ab" style="left:1351px;top:429px;width:129px;height:31px;display:flex;align-items:center;justify-content:flex-start;white-space:nowrap;font-size:13px;color:#555"><span dir="rtl">تست <span dir="ltr" style="unicode-bidi:isolate">۱</span></span></div>
<div class="ab" style="left:1528px;top:427px;width:132px;height:31px;display:flex;align-items:center;justify-content:flex-start;white-space:nowrap;font-size:11px;color:#6c757d;letter-spacing:0px">---</div>
<div class="ab" style="left:1667px;top:427px;width:133px;height:31px;display:flex;align-items:center;justify-content:flex-start;white-space:nowrap;font-size:11px;color:#6c757d;letter-spacing:0px">---</div>
<div class="ab" style="left:1823px;top:430px;width:30px;height:29px;background:#87cefa;border-radius:5px"></div>
<div class="ab" style="left:1830px;top:436px;width:16px;height:13px"><svg width="16" height="13" viewBox="0 0 16 13" style="position:static"><g stroke="#1d2f55" stroke-width="1.15" fill="none"><path d="M3 0V7.5M3 9.5V12M8 0V2.5M8 4.5V12M13 0V7.5M13 9.5V12"/><path d="M0.8 8.5H5.2M5.8 3.5H10.2M10.8 8.5H15.2" stroke-width="1.5"/></g></svg></div>
<div class="ab" style="left:17px;top:461px;width:37px;height:32px;display:flex;align-items:center;justify-content:center;white-space:nowrap;font-size:12px;color:#333"><span dir="rtl"><span dir="ltr" style="unicode-bidi:isolate">۳</span></span></div>
<div class="ab" style="left:54px;top:461px;width:93px;height:32px;display:flex;align-items:center;justify-content:center;white-space:nowrap;font-size:12px;font-weight:bold;color:#212529"><span dir="rtl"><span dir="ltr" style="unicode-bidi:isolate">۲.۱.۲</span></span></div>
<div class="ab" style="left:152px;top:461px;width:367px;height:32px;display:flex;align-items:center;justify-content:flex-start;white-space:nowrap;font-size:12px;font-weight:bold;color:#212529"><span dir="rtl">فعالیت <span dir="ltr" style="unicode-bidi:isolate">۲</span></span></div>
<div class="ab" style="left:525px;top:461px;width:124px;height:32px;display:flex;align-items:center;justify-content:flex-start;white-space:nowrap;font-size:12px;font-weight:bold;color:#212529"><span dir="rtl"><span dir="ltr" style="unicode-bidi:isolate">۱</span> روز</span></div>
<div class="ab" style="left:655px;top:461px;width:124px;height:32px;display:flex;align-items:center;justify-content:flex-start;white-space:nowrap;font-size:12px;font-weight:bold;color:#212529"><span dir="rtl"><span dir="ltr" style="unicode-bidi:isolate">۲</span> روز</span></div>
<div class="ab" style="left:785px;top:461px;width:124px;height:32px;display:flex;align-items:center;justify-content:flex-start;white-space:nowrap;font-size:12px;font-weight:bold;color:#212529"><span dir="rtl"><span dir="ltr" style="unicode-bidi:isolate">۳</span> روز</span></div>
<div class="ab" style="left:915px;top:461px;width:133px;height:31px;display:flex;align-items:center;justify-content:flex-start;white-space:nowrap;font-size:11px;color:#6c757d;letter-spacing:0px">---</div>
<div class="ab" style="left:1054px;top:461px;width:143px;height:32px;display:flex;align-items:center;justify-content:flex-start;white-space:nowrap;font-size:12px;font-weight:bold;color:#212529"><span dir="rtl">آقای سروش ساغریچیها</span></div>
<div class="ab" style="left:1203px;top:468px;width:128px;height:20px;background:#efefef;border-radius:4px;overflow:hidden"></div>
<div class="ab" style="left:1203px;top:468px;width:128px;height:20px;background-color:#198754;background-image:linear-gradient(45deg,rgba(255,255,255,.15) 25%,transparent 25%,transparent 50%,rgba(255,255,255,.15) 50%,rgba(255,255,255,.15) 75%,transparent 75%,transparent);background-size:16px 16px;background-position:8px 0;border-radius:4px"></div>
<div class="ab" style="left:1218px;top:467px;width:112px;height:20px;display:flex;align-items:center;justify-content:flex-start;white-space:nowrap;font-size:11.5px;font-weight:normal;color:#fff"><span dir="rtl"><span dir="ltr" style="unicode-bidi:isolate">۱<span style="display:inline-block;width:.34em;height:.39em;border:.105em solid currentColor;border-radius:50%;margin:0 .05em"></span><span style="display:inline-block;width:.34em;height:.39em;border:.105em solid currentColor;border-radius:50%;margin:0 .05em"></span>%</span></span></div>
<div class="ab" style="left:1342px;top:463px;width:175px;height:31px;border:1px solid #dee2e6;border-radius:5px;background:#fff"></div>
<div class="ab" style="left:1485px;top:463px;width:32px;height:31px;border:1px solid #d0d4d9;border-radius:0 5px 5px 0;background:#f8f9fa"></div>
<div class="ab" style="left:1494px;top:469px;width:16px;height:14px"><svg width="16" height="14" viewBox="0 0 16 14" style="position:static"><path d="M9.2 1.6A5.7 5.7 0 1 0 12.6 7.3" fill="none" stroke="#3a3a3a" stroke-width="1.05"/><path d="M4.3 6.5L6.8 8.8L13.8 2.4" fill="none" stroke="#3a3a3a" stroke-width="1.1"/></svg></div>
<div class="ab" style="left:1351px;top:463px;width:129px;height:31px;display:flex;align-items:center;justify-content:flex-start;white-space:nowrap;font-size:13px;color:#555"><span dir="rtl">تست <span dir="ltr" style="unicode-bidi:isolate">۲</span></span></div>
<div class="ab" style="left:1528px;top:461px;width:132px;height:31px;display:flex;align-items:center;justify-content:flex-start;white-space:nowrap;font-size:11px;color:#6c757d;letter-spacing:0px">---</div>
<div class="ab" style="left:1667px;top:461px;width:133px;height:31px;display:flex;align-items:center;justify-content:flex-start;white-space:nowrap;font-size:11px;color:#6c757d;letter-spacing:0px">---</div>
<div class="ab" style="left:1823px;top:464px;width:30px;height:29px;background:#87cefa;border-radius:5px"></div>
<div class="ab" style="left:1830px;top:470px;width:16px;height:13px"><svg width="16" height="13" viewBox="0 0 16 13" style="position:static"><g stroke="#1d2f55" stroke-width="1.15" fill="none"><path d="M3 0V7.5M3 9.5V12M8 0V2.5M8 4.5V12M13 0V7.5M13 9.5V12"/><path d="M0.8 8.5H5.2M5.8 3.5H10.2M10.8 8.5H15.2" stroke-width="1.5"/></g></svg></div>
<div class="ab" style="left:17px;top:495px;width:37px;height:32px;display:flex;align-items:center;justify-content:center;white-space:nowrap;font-size:12px;color:#333"><span dir="rtl"><span dir="ltr" style="unicode-bidi:isolate">۴</span></span></div>
<div class="ab" style="left:54px;top:495px;width:93px;height:32px;display:flex;align-items:center;justify-content:center;white-space:nowrap;font-size:12px;font-weight:bold;color:#212529"><span dir="rtl"><span dir="ltr" style="unicode-bidi:isolate">۲.۱.۳</span></span></div>
<svg style="left:157px;top:506px" width="7" height="10"><path d="M0 0V9L6 4.5Z" fill="#212529"/></svg>
<div class="ab" style="left:170px;top:495px;width:349px;height:32px;display:flex;align-items:center;justify-content:flex-start;white-space:nowrap;font-size:12px;font-weight:bold;color:#212529"><span dir="rtl">فعالیت <span dir="ltr" style="unicode-bidi:isolate">۳</span> (ویرایش شده)</span></div>
<div class="ab" style="left:525px;top:495px;width:124px;height:32px;display:flex;align-items:center;justify-content:flex-start;white-space:nowrap;font-size:12px;font-weight:bold;color:#212529"><span dir="rtl"><span dir="ltr" style="unicode-bidi:isolate">۳</span> روز</span></div>
<div class="ab" style="left:655px;top:495px;width:124px;height:32px;display:flex;align-items:center;justify-content:flex-start;white-space:nowrap;font-size:12px;font-weight:bold;color:#212529"><span dir="rtl"><span dir="ltr" style="unicode-bidi:isolate">۶</span> روز</span></div>
<div class="ab" style="left:785px;top:495px;width:124px;height:32px;display:flex;align-items:center;justify-content:flex-start;white-space:nowrap;font-size:12px;font-weight:bold;color:#212529"><span dir="rtl"><span dir="ltr" style="unicode-bidi:isolate">۹</span> روز</span></div>
<div class="ab" style="left:914px;top:495px;width:134px;height:32px;display:flex;align-items:center;justify-content:flex-start;white-space:nowrap;font-size:12px;font-weight:bold;color:#212529"><span dir="rtl"><span dir="ltr" style="unicode-bidi:isolate">۱<span style="display:inline-block;width:.34em;height:.39em;border:.105em solid currentColor;border-radius:50%;margin:0 .05em"></span>,<span style="display:inline-block;width:.34em;height:.39em;border:.105em solid currentColor;border-radius:50%;margin:0 .05em"></span><span style="display:inline-block;width:.34em;height:.39em;border:.105em solid currentColor;border-radius:50%;margin:0 .05em"></span><span style="display:inline-block;width:.34em;height:.39em;border:.105em solid currentColor;border-radius:50%;margin:0 .05em"></span>,<span style="display:inline-block;width:.34em;height:.39em;border:.105em solid currentColor;border-radius:50%;margin:0 .05em"></span><span style="display:inline-block;width:.34em;height:.39em;border:.105em solid currentColor;border-radius:50%;margin:0 .05em"></span><span style="display:inline-block;width:.34em;height:.39em;border:.105em solid currentColor;border-radius:50%;margin:0 .05em"></span></span> ریال</span></div>
<div class="ab" style="left:1054px;top:495px;width:143px;height:32px;display:flex;align-items:center;justify-content:flex-start;white-space:nowrap;font-size:12px;font-weight:bold;color:#212529"><span dir="rtl">آقای حسین همتی</span></div>
<div class="ab" style="left:1203px;top:502px;width:128px;height:20px;background:#efefef;border-radius:4px;overflow:hidden"></div>
<div class="ab" style="left:1203px;top:502px;width:31px;height:20px;background-color:#198754;background-image:linear-gradient(45deg,rgba(255,255,255,.15) 25%,transparent 25%,transparent 50%,rgba(255,255,255,.15) 50%,rgba(255,255,255,.15) 75%,transparent 75%,transparent);background-size:16px 16px;background-position:8px 0;border-radius:4px 0 0 4px"></div>
<div class="ab" style="left:1218px;top:501px;width:112px;height:20px;display:flex;align-items:center;justify-content:flex-start;white-space:nowrap;font-size:11.5px;font-weight:normal;color:#212529"><span dir="rtl"><span dir="ltr" style="unicode-bidi:isolate">۲۴.۴۴%</span></span></div>
<div class="ab" style="left:1342px;top:497px;width:175px;height:31px;border:1px solid #dee2e6;border-radius:5px;background:#fff"></div>
<div class="ab" style="left:1485px;top:497px;width:32px;height:31px;border:1px solid #d0d4d9;border-radius:0 5px 5px 0;background:#f8f9fa"></div>
<div class="ab" style="left:1494px;top:503px;width:16px;height:14px"><svg width="16" height="14" viewBox="0 0 16 14" style="position:static"><path d="M9.2 1.6A5.7 5.7 0 1 0 12.6 7.3" fill="none" stroke="#3a3a3a" stroke-width="1.05"/><path d="M4.3 6.5L6.8 8.8L13.8 2.4" fill="none" stroke="#3a3a3a" stroke-width="1.1"/></svg></div>
<div class="ab" style="left:1523px;top:496px;width:138px;height:33px;border:3px solid #0b7d0b;background:#fdfdfd"></div>
<div class="ab" style="left:1528px;top:495px;width:132px;height:33px;display:flex;align-items:center;justify-content:flex-start;white-space:nowrap;font-size:11.2px;color:#5f9df7"><span dir="rtl">گزارش کار روزانه <span dir="ltr" style="unicode-bidi:isolate">۲</span></span></div>
<div class="ab" style="left:1667px;top:495px;width:133px;height:31px;display:flex;align-items:center;justify-content:flex-start;white-space:nowrap;font-size:11px;color:#6c757d;letter-spacing:0px">---</div>
<div class="ab" style="left:1823px;top:498px;width:30px;height:29px;background:#87cefa;border-radius:5px"></div>
<div class="ab" style="left:1830px;top:504px;width:16px;height:13px"><svg width="16" height="13" viewBox="0 0 16 13" style="position:static"><g stroke="#1d2f55" stroke-width="1.15" fill="none"><path d="M3 0V7.5M3 9.5V12M8 0V2.5M8 4.5V12M13 0V7.5M13 9.5V12"/><path d="M0.8 8.5H5.2M5.8 3.5H10.2M10.8 8.5H15.2" stroke-width="1.5"/></g></svg></div>
<div class="ab" style="left:17px;top:529px;width:37px;height:32px;display:flex;align-items:center;justify-content:center;white-space:nowrap;font-size:12px;color:#333"><span dir="rtl"><span dir="ltr" style="unicode-bidi:isolate">۸</span></span></div>
<div class="ab" style="left:54px;top:529px;width:93px;height:32px;display:flex;align-items:center;justify-content:center;white-space:nowrap;font-size:12px;font-weight:bold;color:#212529"><span dir="rtl"><span dir="ltr" style="unicode-bidi:isolate">۲.۱.۴</span></span></div>
<svg style="left:157px;top:540px" width="7" height="10"><path d="M0 0V9L6 4.5Z" fill="#212529"/></svg>
<div class="ab" style="left:170px;top:529px;width:349px;height:32px;display:flex;align-items:center;justify-content:flex-start;white-space:nowrap;font-size:12px;font-weight:bold;color:#212529"><span dir="rtl">فعالیت <span dir="ltr" style="unicode-bidi:isolate">۴</span></span></div>
<div class="ab" style="left:525px;top:529px;width:124px;height:32px;display:flex;align-items:center;justify-content:flex-start;white-space:nowrap;font-size:12px;font-weight:bold;color:#212529"><span dir="rtl"><span dir="ltr" style="unicode-bidi:isolate">۹</span> روز</span></div>
<div class="ab" style="left:655px;top:529px;width:124px;height:32px;display:flex;align-items:center;justify-content:flex-start;white-space:nowrap;font-size:12px;font-weight:bold;color:#212529"><span dir="rtl"><span dir="ltr" style="unicode-bidi:isolate">۱۸</span> روز</span></div>
<div class="ab" style="left:785px;top:529px;width:124px;height:32px;display:flex;align-items:center;justify-content:flex-start;white-space:nowrap;font-size:12px;font-weight:bold;color:#212529"><span dir="rtl"><span dir="ltr" style="unicode-bidi:isolate">۲۷</span> روز</span></div>
<div class="ab" style="left:915px;top:529px;width:133px;height:31px;display:flex;align-items:center;justify-content:flex-start;white-space:nowrap;font-size:11px;color:#6c757d;letter-spacing:0px">---</div>
<div class="ab" style="left:1054px;top:529px;width:143px;height:32px;display:flex;align-items:center;justify-content:flex-start;white-space:nowrap;font-size:12px;font-weight:bold;color:#212529"><span dir="rtl">آقای سروش ساغریچیها</span></div>
<div class="ab" style="left:1203px;top:536px;width:128px;height:20px;background:#efefef;border-radius:4px;overflow:hidden"></div>
<div class="ab" style="left:1203px;top:536px;width:23px;height:20px;background-color:#198754;background-image:linear-gradient(45deg,rgba(255,255,255,.15) 25%,transparent 25%,transparent 50%,rgba(255,255,255,.15) 50%,rgba(255,255,255,.15) 75%,transparent 75%,transparent);background-size:16px 16px;background-position:8px 0;border-radius:4px 0 0 4px"></div>
<div class="ab" style="left:1218px;top:535px;width:112px;height:20px;display:flex;align-items:center;justify-content:flex-start;white-space:nowrap;font-size:11.5px;font-weight:normal;color:#212529"><span dir="rtl"><span dir="ltr" style="unicode-bidi:isolate">۱۷.۹۳%</span></span></div>
<div class="ab" style="left:1342px;top:531px;width:175px;height:31px;border:1px solid #dee2e6;border-radius:5px;background:#fff"></div>
<div class="ab" style="left:1485px;top:531px;width:32px;height:31px;border:1px solid #d0d4d9;border-radius:0 5px 5px 0;background:#f8f9fa"></div>
<div class="ab" style="left:1494px;top:537px;width:16px;height:14px"><svg width="16" height="14" viewBox="0 0 16 14" style="position:static"><path d="M9.2 1.6A5.7 5.7 0 1 0 12.6 7.3" fill="none" stroke="#3a3a3a" stroke-width="1.05"/><path d="M4.3 6.5L6.8 8.8L13.8 2.4" fill="none" stroke="#3a3a3a" stroke-width="1.1"/></svg></div>
<div class="ab" style="left:1528px;top:529px;width:132px;height:31px;display:flex;align-items:center;justify-content:flex-start;white-space:nowrap;font-size:11px;color:#6c757d;letter-spacing:0px">---</div>
<div class="ab" style="left:1667px;top:529px;width:133px;height:31px;display:flex;align-items:center;justify-content:flex-start;white-space:nowrap;font-size:11px;color:#6c757d;letter-spacing:0px">---</div>
<div class="ab" style="left:1823px;top:532px;width:30px;height:29px;background:#87cefa;border-radius:5px"></div>
<div class="ab" style="left:1830px;top:538px;width:16px;height:13px"><svg width="16" height="13" viewBox="0 0 16 13" style="position:static"><g stroke="#1d2f55" stroke-width="1.15" fill="none"><path d="M3 0V7.5M3 9.5V12M8 0V2.5M8 4.5V12M13 0V7.5M13 9.5V12"/><path d="M0.8 8.5H5.2M5.8 3.5H10.2M10.8 8.5H15.2" stroke-width="1.5"/></g></svg></div>
<div class="ab" style="left:17px;top:563px;width:37px;height:30px;display:flex;align-items:center;justify-content:center;white-space:nowrap;font-size:12px;color:#333"><span dir="rtl"><span dir="ltr" style="unicode-bidi:isolate">۲<span style="display:inline-block;width:.34em;height:.39em;border:.105em solid currentColor;border-radius:50%;margin:0 .05em"></span></span></span></div>
<div class="ab" style="left:54px;top:563px;width:93px;height:30px;display:flex;align-items:center;justify-content:center;white-space:nowrap;font-size:12px;font-weight:bold;color:#212529"><span dir="rtl"><span dir="ltr" style="unicode-bidi:isolate">۲.۱.۵</span></span></div>
<svg style="left:157px;top:573px" width="7" height="10"><path d="M0 0V9L6 4.5Z" fill="#212529"/></svg>
<div class="ab" style="left:170px;top:563px;width:349px;height:30px;display:flex;align-items:center;justify-content:flex-start;white-space:nowrap;font-size:12px;font-weight:bold;color:#212529"><span dir="rtl">فعالیت <span dir="ltr" style="unicode-bidi:isolate">۵</span></span></div>
<div class="ab" style="left:525px;top:563px;width:124px;height:30px;display:flex;align-items:center;justify-content:flex-start;white-space:nowrap;font-size:12px;font-weight:bold;color:#212529"><span dir="rtl"><span dir="ltr" style="unicode-bidi:isolate">۱</span> روز</span></div>
<div class="ab" style="left:655px;top:563px;width:124px;height:30px;display:flex;align-items:center;justify-content:flex-start;white-space:nowrap;font-size:12px;font-weight:bold;color:#212529"><span dir="rtl"><span dir="ltr" style="unicode-bidi:isolate">۲</span> روز</span></div>
<div class="ab" style="left:785px;top:563px;width:124px;height:30px;display:flex;align-items:center;justify-content:flex-start;white-space:nowrap;font-size:12px;font-weight:bold;color:#212529"><span dir="rtl"><span dir="ltr" style="unicode-bidi:isolate">۳</span> روز</span></div>
<div class="ab" style="left:915px;top:563px;width:133px;height:29px;display:flex;align-items:center;justify-content:flex-start;white-space:nowrap;font-size:11px;color:#6c757d;letter-spacing:0px">---</div>
<div class="ab" style="left:1054px;top:563px;width:143px;height:30px;display:flex;align-items:center;justify-content:flex-start;white-space:nowrap;font-size:12px;font-weight:bold;color:#212529"><span dir="rtl">آقای سروش ساغریچیها</span></div>
<div class="ab" style="left:1203px;top:575px;width:107px;height:8px;background:#efefef;border:1px solid #a0a0a0;border-radius:4px"></div>
<div class="ab" style="left:1203px;top:571px;width:16px;height:16px;border-radius:50%;background:#0d6efd"></div>
<div class="ab" style="left:1314px;top:563px;width:20px;height:32px;display:flex;align-items:center;justify-content:flex-start;white-space:nowrap;font-size:12px;font-weight:bold;color:#111"><span dir="rtl"><span dir="ltr" style="unicode-bidi:isolate"><span style="display:inline-block;width:.34em;height:.39em;border:.105em solid currentColor;border-radius:50%;margin:0 .05em"></span>%</span></span></div>
<div class="ab" style="left:1342px;top:563px;width:178px;height:29px;display:flex;align-items:center;justify-content:flex-start;white-space:nowrap;font-size:11px;color:#6c757d;letter-spacing:0px">---</div>
<div class="ab" style="left:1528px;top:563px;width:132px;height:29px;display:flex;align-items:center;justify-content:flex-start;white-space:nowrap;font-size:11px;color:#6c757d;letter-spacing:0px">---</div>
<div class="ab" style="left:1667px;top:563px;width:133px;height:29px;display:flex;align-items:center;justify-content:flex-start;white-space:nowrap;font-size:11px;color:#6c757d;letter-spacing:0px">---</div>
<div class="ab" style="left:1823px;top:565px;width:30px;height:29px;background:#87cefa;border-radius:5px"></div>
<div class="ab" style="left:1830px;top:571px;width:16px;height:13px"><svg width="16" height="13" viewBox="0 0 16 13" style="position:static"><g stroke="#1d2f55" stroke-width="1.15" fill="none"><path d="M3 0V7.5M3 9.5V12M8 0V2.5M8 4.5V12M13 0V7.5M13 9.5V12"/><path d="M0.8 8.5H5.2M5.8 3.5H10.2M10.8 8.5H15.2" stroke-width="1.5"/></g></svg></div>
<div class="ab" style="left:17px;top:595px;width:37px;height:30px;display:flex;align-items:center;justify-content:center;white-space:nowrap;font-size:12px;color:#333"><span dir="rtl"><span dir="ltr" style="unicode-bidi:isolate">۲۱</span></span></div>
<div class="ab" style="left:54px;top:595px;width:93px;height:30px;display:flex;align-items:center;justify-content:center;white-space:nowrap;font-size:12px;font-weight:bold;color:#212529"><span dir="rtl"><span dir="ltr" style="unicode-bidi:isolate">۲.۱.۶</span></span></div>
<svg style="left:157px;top:605px" width="7" height="10"><path d="M0 0V9L6 4.5Z" fill="#212529"/></svg>
<div class="ab" style="left:170px;top:595px;width:349px;height:30px;display:flex;align-items:center;justify-content:flex-start;white-space:nowrap;font-size:12px;font-weight:bold;color:#212529"><span dir="rtl">فعالیت <span dir="ltr" style="unicode-bidi:isolate">۶</span></span></div>
<div class="ab" style="left:525px;top:595px;width:124px;height:30px;display:flex;align-items:center;justify-content:flex-start;white-space:nowrap;font-size:12px;font-weight:bold;color:#212529"><span dir="rtl"><span dir="ltr" style="unicode-bidi:isolate">۱</span> روز</span></div>
<div class="ab" style="left:655px;top:595px;width:124px;height:30px;display:flex;align-items:center;justify-content:flex-start;white-space:nowrap;font-size:12px;font-weight:bold;color:#212529"><span dir="rtl"><span dir="ltr" style="unicode-bidi:isolate">۲</span> روز</span></div>
<div class="ab" style="left:785px;top:595px;width:124px;height:30px;display:flex;align-items:center;justify-content:flex-start;white-space:nowrap;font-size:12px;font-weight:bold;color:#212529"><span dir="rtl"><span dir="ltr" style="unicode-bidi:isolate">۳</span> روز</span></div>
<div class="ab" style="left:915px;top:595px;width:133px;height:29px;display:flex;align-items:center;justify-content:flex-start;white-space:nowrap;font-size:11px;color:#6c757d;letter-spacing:0px">---</div>
<div class="ab" style="left:1054px;top:595px;width:143px;height:30px;display:flex;align-items:center;justify-content:flex-start;white-space:nowrap;font-size:12px;font-weight:bold;color:#212529"><span dir="rtl">آقای سروش ساغریچیها</span></div>
<div class="ab" style="left:1203px;top:607px;width:107px;height:8px;background:#efefef;border:1px solid #a0a0a0;border-radius:4px"></div>
<div class="ab" style="left:1203px;top:603px;width:16px;height:16px;border-radius:50%;background:#0d6efd"></div>
<div class="ab" style="left:1314px;top:595px;width:20px;height:32px;display:flex;align-items:center;justify-content:flex-start;white-space:nowrap;font-size:12px;font-weight:bold;color:#111"><span dir="rtl"><span dir="ltr" style="unicode-bidi:isolate"><span style="display:inline-block;width:.34em;height:.39em;border:.105em solid currentColor;border-radius:50%;margin:0 .05em"></span>%</span></span></div>
<div class="ab" style="left:1342px;top:595px;width:178px;height:29px;display:flex;align-items:center;justify-content:flex-start;white-space:nowrap;font-size:11px;color:#6c757d;letter-spacing:0px">---</div>
<div class="ab" style="left:1528px;top:595px;width:132px;height:29px;display:flex;align-items:center;justify-content:flex-start;white-space:nowrap;font-size:11px;color:#6c757d;letter-spacing:0px">---</div>
<div class="ab" style="left:1667px;top:595px;width:133px;height:29px;display:flex;align-items:center;justify-content:flex-start;white-space:nowrap;font-size:11px;color:#6c757d;letter-spacing:0px">---</div>
<div class="ab" style="left:1823px;top:597px;width:30px;height:29px;background:#87cefa;border-radius:5px"></div>
<div class="ab" style="left:1830px;top:603px;width:16px;height:13px"><svg width="16" height="13" viewBox="0 0 16 13" style="position:static"><g stroke="#1d2f55" stroke-width="1.15" fill="none"><path d="M3 0V7.5M3 9.5V12M8 0V2.5M8 4.5V12M13 0V7.5M13 9.5V12"/><path d="M0.8 8.5H5.2M5.8 3.5H10.2M10.8 8.5H15.2" stroke-width="1.5"/></g></svg></div>
<div class="ab" style="left:17px;top:627px;width:37px;height:30px;display:flex;align-items:center;justify-content:center;white-space:nowrap;font-size:12px;color:#333"><span dir="rtl"><span dir="ltr" style="unicode-bidi:isolate">۲۲</span></span></div>
<div class="ab" style="left:54px;top:627px;width:93px;height:30px;display:flex;align-items:center;justify-content:center;white-space:nowrap;font-size:12px;font-weight:bold;color:#212529"><span dir="rtl"><span dir="ltr" style="unicode-bidi:isolate">۲.۱.۷</span></span></div>
<svg style="left:157px;top:637px" width="7" height="10"><path d="M0 0V9L6 4.5Z" fill="#212529"/></svg>
<div class="ab" style="left:170px;top:627px;width:349px;height:30px;display:flex;align-items:center;justify-content:flex-start;white-space:nowrap;font-size:12px;font-weight:bold;color:#212529"><span dir="rtl">فعالیت <span dir="ltr" style="unicode-bidi:isolate">۷</span></span></div>
<div class="ab" style="left:525px;top:627px;width:124px;height:30px;display:flex;align-items:center;justify-content:flex-start;white-space:nowrap;font-size:12px;font-weight:bold;color:#212529"><span dir="rtl"><span dir="ltr" style="unicode-bidi:isolate">۱</span> روز</span></div>
<div class="ab" style="left:655px;top:627px;width:124px;height:30px;display:flex;align-items:center;justify-content:flex-start;white-space:nowrap;font-size:12px;font-weight:bold;color:#212529"><span dir="rtl"><span dir="ltr" style="unicode-bidi:isolate">۲</span> روز</span></div>
<div class="ab" style="left:785px;top:627px;width:124px;height:30px;display:flex;align-items:center;justify-content:flex-start;white-space:nowrap;font-size:12px;font-weight:bold;color:#212529"><span dir="rtl"><span dir="ltr" style="unicode-bidi:isolate">۳</span> روز</span></div>
<div class="ab" style="left:915px;top:627px;width:133px;height:29px;display:flex;align-items:center;justify-content:flex-start;white-space:nowrap;font-size:11px;color:#6c757d;letter-spacing:0px">---</div>
<div class="ab" style="left:1054px;top:627px;width:143px;height:30px;display:flex;align-items:center;justify-content:flex-start;white-space:nowrap;font-size:12px;font-weight:bold;color:#212529"><span dir="rtl">آقای سروش ساغریچیها</span></div>
<div class="ab" style="left:1203px;top:639px;width:107px;height:8px;background:#efefef;border:1px solid #a0a0a0;border-radius:4px"></div>
<div class="ab" style="left:1203px;top:635px;width:16px;height:16px;border-radius:50%;background:#0d6efd"></div>
<div class="ab" style="left:1314px;top:627px;width:20px;height:32px;display:flex;align-items:center;justify-content:flex-start;white-space:nowrap;font-size:12px;font-weight:bold;color:#111"><span dir="rtl"><span dir="ltr" style="unicode-bidi:isolate"><span style="display:inline-block;width:.34em;height:.39em;border:.105em solid currentColor;border-radius:50%;margin:0 .05em"></span>%</span></span></div>
<div class="ab" style="left:1342px;top:627px;width:178px;height:29px;display:flex;align-items:center;justify-content:flex-start;white-space:nowrap;font-size:11px;color:#6c757d;letter-spacing:0px">---</div>
<div class="ab" style="left:1528px;top:627px;width:132px;height:29px;display:flex;align-items:center;justify-content:flex-start;white-space:nowrap;font-size:11px;color:#6c757d;letter-spacing:0px">---</div>
<div class="ab" style="left:1667px;top:627px;width:133px;height:29px;display:flex;align-items:center;justify-content:flex-start;white-space:nowrap;font-size:11px;color:#6c757d;letter-spacing:0px">---</div>
<div class="ab" style="left:1823px;top:629px;width:30px;height:29px;background:#87cefa;border-radius:5px"></div>
<div class="ab" style="left:1830px;top:635px;width:16px;height:13px"><svg width="16" height="13" viewBox="0 0 16 13" style="position:static"><g stroke="#1d2f55" stroke-width="1.15" fill="none"><path d="M3 0V7.5M3 9.5V12M8 0V2.5M8 4.5V12M13 0V7.5M13 9.5V12"/><path d="M0.8 8.5H5.2M5.8 3.5H10.2M10.8 8.5H15.2" stroke-width="1.5"/></g></svg></div>
<div class="ab" style="left:17px;top:659px;width:37px;height:30px;display:flex;align-items:center;justify-content:center;white-space:nowrap;font-size:12px;color:#333"><span dir="rtl"><span dir="ltr" style="unicode-bidi:isolate">۲۳</span></span></div>
<div class="ab" style="left:54px;top:659px;width:93px;height:30px;display:flex;align-items:center;justify-content:center;white-space:nowrap;font-size:12px;font-weight:bold;color:#212529"><span dir="rtl"><span dir="ltr" style="unicode-bidi:isolate">۲.۱.۸</span></span></div>
<svg style="left:157px;top:669px" width="7" height="10"><path d="M0 0V9L6 4.5Z" fill="#212529"/></svg>
<div class="ab" style="left:170px;top:659px;width:349px;height:30px;display:flex;align-items:center;justify-content:flex-start;white-space:nowrap;font-size:12px;font-weight:bold;color:#212529"><span dir="rtl">فعالیت <span dir="ltr" style="unicode-bidi:isolate">۸</span></span></div>
<div class="ab" style="left:525px;top:659px;width:124px;height:30px;display:flex;align-items:center;justify-content:flex-start;white-space:nowrap;font-size:12px;font-weight:bold;color:#212529"><span dir="rtl"><span dir="ltr" style="unicode-bidi:isolate">۱</span> روز</span></div>
<div class="ab" style="left:655px;top:659px;width:124px;height:30px;display:flex;align-items:center;justify-content:flex-start;white-space:nowrap;font-size:12px;font-weight:bold;color:#212529"><span dir="rtl"><span dir="ltr" style="unicode-bidi:isolate">۲</span> روز</span></div>
<div class="ab" style="left:785px;top:659px;width:124px;height:30px;display:flex;align-items:center;justify-content:flex-start;white-space:nowrap;font-size:12px;font-weight:bold;color:#212529"><span dir="rtl"><span dir="ltr" style="unicode-bidi:isolate">۳</span> روز</span></div>
<div class="ab" style="left:915px;top:659px;width:133px;height:29px;display:flex;align-items:center;justify-content:flex-start;white-space:nowrap;font-size:11px;color:#6c757d;letter-spacing:0px">---</div>
<div class="ab" style="left:1054px;top:659px;width:143px;height:30px;display:flex;align-items:center;justify-content:flex-start;white-space:nowrap;font-size:12px;font-weight:bold;color:#212529"><span dir="rtl">آقای سروش ساغریچیها</span></div>
<div class="ab" style="left:1203px;top:671px;width:107px;height:8px;background:#efefef;border:1px solid #a0a0a0;border-radius:4px"></div>
<div class="ab" style="left:1203px;top:667px;width:16px;height:16px;border-radius:50%;background:#0d6efd"></div>
<div class="ab" style="left:1314px;top:659px;width:20px;height:32px;display:flex;align-items:center;justify-content:flex-start;white-space:nowrap;font-size:12px;font-weight:bold;color:#111"><span dir="rtl"><span dir="ltr" style="unicode-bidi:isolate"><span style="display:inline-block;width:.34em;height:.39em;border:.105em solid currentColor;border-radius:50%;margin:0 .05em"></span>%</span></span></div>
<div class="ab" style="left:1342px;top:659px;width:178px;height:29px;display:flex;align-items:center;justify-content:flex-start;white-space:nowrap;font-size:11px;color:#6c757d;letter-spacing:0px">---</div>
<div class="ab" style="left:1528px;top:659px;width:132px;height:29px;display:flex;align-items:center;justify-content:flex-start;white-space:nowrap;font-size:11px;color:#6c757d;letter-spacing:0px">---</div>
<div class="ab" style="left:1667px;top:659px;width:133px;height:29px;display:flex;align-items:center;justify-content:flex-start;white-space:nowrap;font-size:11px;color:#6c757d;letter-spacing:0px">---</div>
<div class="ab" style="left:1823px;top:661px;width:30px;height:29px;background:#87cefa;border-radius:5px"></div>
<div class="ab" style="left:1830px;top:667px;width:16px;height:13px"><svg width="16" height="13" viewBox="0 0 16 13" style="position:static"><g stroke="#1d2f55" stroke-width="1.15" fill="none"><path d="M3 0V7.5M3 9.5V12M8 0V2.5M8 4.5V12M13 0V7.5M13 9.5V12"/><path d="M0.8 8.5H5.2M5.8 3.5H10.2M10.8 8.5H15.2" stroke-width="1.5"/></g></svg></div>
<div class="ab" style="left:17px;top:691px;width:37px;height:30px;display:flex;align-items:center;justify-content:center;white-space:nowrap;font-size:12px;color:#333"><span dir="rtl"><span dir="ltr" style="unicode-bidi:isolate">۲۴</span></span></div>
<div class="ab" style="left:54px;top:691px;width:93px;height:30px;display:flex;align-items:center;justify-content:center;white-space:nowrap;font-size:12px;font-weight:bold;color:#212529"><span dir="rtl"><span dir="ltr" style="unicode-bidi:isolate">۲.۱.۹</span></span></div>
<svg style="left:157px;top:701px" width="7" height="10"><path d="M0 0V9L6 4.5Z" fill="#212529"/></svg>
<div class="ab" style="left:170px;top:691px;width:349px;height:30px;display:flex;align-items:center;justify-content:flex-start;white-space:nowrap;font-size:12px;font-weight:bold;color:#212529"><span dir="rtl">فعالیت <span dir="ltr" style="unicode-bidi:isolate">۹</span></span></div>
<div class="ab" style="left:525px;top:691px;width:124px;height:30px;display:flex;align-items:center;justify-content:flex-start;white-space:nowrap;font-size:12px;font-weight:bold;color:#212529"><span dir="rtl"><span dir="ltr" style="unicode-bidi:isolate">۱</span> روز</span></div>
<div class="ab" style="left:655px;top:691px;width:124px;height:30px;display:flex;align-items:center;justify-content:flex-start;white-space:nowrap;font-size:12px;font-weight:bold;color:#212529"><span dir="rtl"><span dir="ltr" style="unicode-bidi:isolate">۲</span> روز</span></div>
<div class="ab" style="left:785px;top:691px;width:124px;height:30px;display:flex;align-items:center;justify-content:flex-start;white-space:nowrap;font-size:12px;font-weight:bold;color:#212529"><span dir="rtl"><span dir="ltr" style="unicode-bidi:isolate">۳</span> روز</span></div>
<div class="ab" style="left:915px;top:691px;width:133px;height:29px;display:flex;align-items:center;justify-content:flex-start;white-space:nowrap;font-size:11px;color:#6c757d;letter-spacing:0px">---</div>
<div class="ab" style="left:1054px;top:691px;width:143px;height:30px;display:flex;align-items:center;justify-content:flex-start;white-space:nowrap;font-size:12px;font-weight:bold;color:#212529"><span dir="rtl">آقای سروش ساغریچیها</span></div>
<div class="ab" style="left:1203px;top:703px;width:107px;height:8px;background:#efefef;border:1px solid #a0a0a0;border-radius:4px"></div>
<div class="ab" style="left:1203px;top:699px;width:16px;height:16px;border-radius:50%;background:#0d6efd"></div>
<div class="ab" style="left:1314px;top:691px;width:20px;height:32px;display:flex;align-items:center;justify-content:flex-start;white-space:nowrap;font-size:12px;font-weight:bold;color:#111"><span dir="rtl"><span dir="ltr" style="unicode-bidi:isolate"><span style="display:inline-block;width:.34em;height:.39em;border:.105em solid currentColor;border-radius:50%;margin:0 .05em"></span>%</span></span></div>
<div class="ab" style="left:1342px;top:691px;width:178px;height:29px;display:flex;align-items:center;justify-content:flex-start;white-space:nowrap;font-size:11px;color:#6c757d;letter-spacing:0px">---</div>
<div class="ab" style="left:1528px;top:691px;width:132px;height:29px;display:flex;align-items:center;justify-content:flex-start;white-space:nowrap;font-size:11px;color:#6c757d;letter-spacing:0px">---</div>
<div class="ab" style="left:1667px;top:691px;width:133px;height:29px;display:flex;align-items:center;justify-content:flex-start;white-space:nowrap;font-size:11px;color:#6c757d;letter-spacing:0px">---</div>
<div class="ab" style="left:1823px;top:693px;width:30px;height:29px;background:#87cefa;border-radius:5px"></div>
<div class="ab" style="left:1830px;top:699px;width:16px;height:13px"><svg width="16" height="13" viewBox="0 0 16 13" style="position:static"><g stroke="#1d2f55" stroke-width="1.15" fill="none"><path d="M3 0V7.5M3 9.5V12M8 0V2.5M8 4.5V12M13 0V7.5M13 9.5V12"/><path d="M0.8 8.5H5.2M5.8 3.5H10.2M10.8 8.5H15.2" stroke-width="1.5"/></g></svg></div>
<div class="ab" style="left:17px;top:723px;width:37px;height:30px;display:flex;align-items:center;justify-content:center;white-space:nowrap;font-size:12px;color:#333"><span dir="rtl"><span dir="ltr" style="unicode-bidi:isolate">۲۵</span></span></div>
<div class="ab" style="left:54px;top:723px;width:93px;height:30px;display:flex;align-items:center;justify-content:center;white-space:nowrap;font-size:12px;font-weight:bold;color:#212529"><span dir="rtl"><span dir="ltr" style="unicode-bidi:isolate">۲.۱.۱<span style="display:inline-block;width:.34em;height:.39em;border:.105em solid currentColor;border-radius:50%;margin:0 .05em"></span></span></span></div>
<svg style="left:157px;top:733px" width="7" height="10"><path d="M0 0V9L6 4.5Z" fill="#212529"/></svg>
<div class="ab" style="left:170px;top:723px;width:349px;height:30px;display:flex;align-items:center;justify-content:flex-start;white-space:nowrap;font-size:12px;font-weight:bold;color:#212529"><span dir="rtl">فعالیت <span dir="ltr" style="unicode-bidi:isolate">۱<span style="display:inline-block;width:.34em;height:.39em;border:.105em solid currentColor;border-radius:50%;margin:0 .05em"></span></span></span></div>
<div class="ab" style="left:525px;top:723px;width:124px;height:30px;display:flex;align-items:center;justify-content:flex-start;white-space:nowrap;font-size:12px;font-weight:bold;color:#212529"><span dir="rtl"><span dir="ltr" style="unicode-bidi:isolate">۲</span> روز</span></div>
<div class="ab" style="left:655px;top:723px;width:124px;height:30px;display:flex;align-items:center;justify-content:flex-start;white-space:nowrap;font-size:12px;font-weight:bold;color:#212529"><span dir="rtl"><span dir="ltr" style="unicode-bidi:isolate">۴</span> روز</span></div>
<div class="ab" style="left:785px;top:723px;width:124px;height:30px;display:flex;align-items:center;justify-content:flex-start;white-space:nowrap;font-size:12px;font-weight:bold;color:#212529"><span dir="rtl"><span dir="ltr" style="unicode-bidi:isolate">۶</span> روز</span></div>
<div class="ab" style="left:914px;top:723px;width:134px;height:30px;display:flex;align-items:center;justify-content:flex-start;white-space:nowrap;font-size:12px;font-weight:bold;color:#212529"><span dir="rtl"><span dir="ltr" style="unicode-bidi:isolate">۱<span style="display:inline-block;width:.34em;height:.39em;border:.105em solid currentColor;border-radius:50%;margin:0 .05em"></span>,<span style="display:inline-block;width:.34em;height:.39em;border:.105em solid currentColor;border-radius:50%;margin:0 .05em"></span><span style="display:inline-block;width:.34em;height:.39em;border:.105em solid currentColor;border-radius:50%;margin:0 .05em"></span><span style="display:inline-block;width:.34em;height:.39em;border:.105em solid currentColor;border-radius:50%;margin:0 .05em"></span>,<span style="display:inline-block;width:.34em;height:.39em;border:.105em solid currentColor;border-radius:50%;margin:0 .05em"></span><span style="display:inline-block;width:.34em;height:.39em;border:.105em solid currentColor;border-radius:50%;margin:0 .05em"></span><span style="display:inline-block;width:.34em;height:.39em;border:.105em solid currentColor;border-radius:50%;margin:0 .05em"></span></span> ریال</span></div>
<div class="ab" style="left:1054px;top:723px;width:143px;height:30px;display:flex;align-items:center;justify-content:flex-start;white-space:nowrap;font-size:12px;font-weight:bold;color:#212529"><span dir="rtl">آقای سروش ساغریچیها</span></div>
<div class="ab" style="left:1203px;top:730px;width:128px;height:20px;background:#efefef;border-radius:4px;overflow:hidden"></div>
<div class="ab" style="left:1218px;top:729px;width:112px;height:20px;display:flex;align-items:center;justify-content:flex-start;white-space:nowrap;font-size:11.5px;font-weight:normal;color:#212529"><span dir="rtl"><span dir="ltr" style="unicode-bidi:isolate"><span style="display:inline-block;width:.34em;height:.39em;border:.105em solid currentColor;border-radius:50%;margin:0 .05em"></span>%</span></span></div>
<div class="ab" style="left:1342px;top:723px;width:178px;height:29px;display:flex;align-items:center;justify-content:flex-start;white-space:nowrap;font-size:11px;color:#6c757d;letter-spacing:0px">---</div>
<div class="ab" style="left:1528px;top:723px;width:132px;height:29px;display:flex;align-items:center;justify-content:flex-start;white-space:nowrap;font-size:11px;color:#6c757d;letter-spacing:0px">---</div>
<div class="ab" style="left:1667px;top:723px;width:133px;height:29px;display:flex;align-items:center;justify-content:flex-start;white-space:nowrap;font-size:11px;color:#6c757d;letter-spacing:0px">---</div>
<div class="ab" style="left:1823px;top:725px;width:30px;height:29px;background:#87cefa;border-radius:5px"></div>
<div class="ab" style="left:1830px;top:731px;width:16px;height:13px"><svg width="16" height="13" viewBox="0 0 16 13" style="position:static"><g stroke="#1d2f55" stroke-width="1.15" fill="none"><path d="M3 0V7.5M3 9.5V12M8 0V2.5M8 4.5V12M13 0V7.5M13 9.5V12"/><path d="M0.8 8.5H5.2M5.8 3.5H10.2M10.8 8.5H15.2" stroke-width="1.5"/></g></svg></div>
<div class="ab" style="left:17px;top:755px;width:37px;height:32px;display:flex;align-items:center;justify-content:center;white-space:nowrap;font-size:12px;color:#333"><span dir="rtl"><span dir="ltr" style="unicode-bidi:isolate">۲۸</span></span></div>
<div class="ab" style="left:54px;top:755px;width:93px;height:32px;display:flex;align-items:center;justify-content:center;white-space:nowrap;font-size:12px;font-weight:bold;color:#212529"><span dir="rtl"><span dir="ltr" style="unicode-bidi:isolate">۲.۱.۱۱</span></span></div>
<svg style="left:157px;top:766px" width="7" height="10"><path d="M0 0V9L6 4.5Z" fill="#212529"/></svg>
<div class="ab" style="left:170px;top:755px;width:349px;height:32px;display:flex;align-items:center;justify-content:flex-start;white-space:nowrap;font-size:12px;font-weight:bold;color:#212529"><span dir="rtl">فعالیت <span dir="ltr" style="unicode-bidi:isolate">۱۱</span></span></div>
<div class="ab" style="left:525px;top:755px;width:124px;height:32px;display:flex;align-items:center;justify-content:flex-start;white-space:nowrap;font-size:12px;font-weight:bold;color:#212529"><span dir="rtl"><span dir="ltr" style="unicode-bidi:isolate">۲</span> روز</span></div>
<div class="ab" style="left:655px;top:755px;width:124px;height:32px;display:flex;align-items:center;justify-content:flex-start;white-space:nowrap;font-size:12px;font-weight:bold;color:#212529"><span dir="rtl"><span dir="ltr" style="unicode-bidi:isolate">۴</span> روز</span></div>
<div class="ab" style="left:785px;top:755px;width:124px;height:32px;display:flex;align-items:center;justify-content:flex-start;white-space:nowrap;font-size:12px;font-weight:bold;color:#212529"><span dir="rtl"><span dir="ltr" style="unicode-bidi:isolate">۶</span> روز</span></div>
<div class="ab" style="left:914px;top:755px;width:134px;height:32px;display:flex;align-items:center;justify-content:flex-start;white-space:nowrap;font-size:12px;font-weight:bold;color:#212529"><span dir="rtl"><span dir="ltr" style="unicode-bidi:isolate">۴,<span style="display:inline-block;width:.34em;height:.39em;border:.105em solid currentColor;border-radius:50%;margin:0 .05em"></span><span style="display:inline-block;width:.34em;height:.39em;border:.105em solid currentColor;border-radius:50%;margin:0 .05em"></span><span style="display:inline-block;width:.34em;height:.39em;border:.105em solid currentColor;border-radius:50%;margin:0 .05em"></span>,<span style="display:inline-block;width:.34em;height:.39em;border:.105em solid currentColor;border-radius:50%;margin:0 .05em"></span><span style="display:inline-block;width:.34em;height:.39em;border:.105em solid currentColor;border-radius:50%;margin:0 .05em"></span><span style="display:inline-block;width:.34em;height:.39em;border:.105em solid currentColor;border-radius:50%;margin:0 .05em"></span></span> ریال</span></div>
<div class="ab" style="left:1054px;top:755px;width:143px;height:32px;display:flex;align-items:center;justify-content:flex-start;white-space:nowrap;font-size:12px;font-weight:bold;color:#212529"><span dir="rtl">آقای سروش ساغریچیها</span></div>
<div class="ab" style="left:1203px;top:762px;width:128px;height:20px;background:#efefef;border-radius:4px;overflow:hidden"></div>
<div class="ab" style="left:1203px;top:762px;width:20px;height:20px;background-color:#198754;background-image:linear-gradient(45deg,rgba(255,255,255,.15) 25%,transparent 25%,transparent 50%,rgba(255,255,255,.15) 50%,rgba(255,255,255,.15) 75%,transparent 75%,transparent);background-size:16px 16px;background-position:8px 0;border-radius:4px 0 0 4px"></div>
<div class="ab" style="left:1218px;top:761px;width:112px;height:20px;display:flex;align-items:center;justify-content:flex-start;white-space:nowrap;font-size:11.5px;font-weight:normal;color:#212529"><span dir="rtl"><span dir="ltr" style="unicode-bidi:isolate">۱۵.۷۶%</span></span></div>
<div class="ab" style="left:1342px;top:757px;width:175px;height:31px;border:1px solid #dee2e6;border-radius:5px;background:#fff"></div>
<div class="ab" style="left:1485px;top:757px;width:32px;height:31px;border:1px solid #d0d4d9;border-radius:0 5px 5px 0;background:#f8f9fa"></div>
<div class="ab" style="left:1494px;top:763px;width:16px;height:14px"><svg width="16" height="14" viewBox="0 0 16 14" style="position:static"><path d="M9.2 1.6A5.7 5.7 0 1 0 12.6 7.3" fill="none" stroke="#3a3a3a" stroke-width="1.05"/><path d="M4.3 6.5L6.8 8.8L13.8 2.4" fill="none" stroke="#3a3a3a" stroke-width="1.1"/></svg></div>
<div class="ab" style="left:1528px;top:755px;width:132px;height:31px;display:flex;align-items:center;justify-content:flex-start;white-space:nowrap;font-size:11px;color:#6c757d;letter-spacing:0px">---</div>
<div class="ab" style="left:1667px;top:755px;width:133px;height:31px;display:flex;align-items:center;justify-content:flex-start;white-space:nowrap;font-size:11px;color:#6c757d;letter-spacing:0px">---</div>
<div class="ab" style="left:1823px;top:758px;width:30px;height:29px;background:#87cefa;border-radius:5px"></div>
<div class="ab" style="left:1830px;top:764px;width:16px;height:13px"><svg width="16" height="13" viewBox="0 0 16 13" style="position:static"><g stroke="#1d2f55" stroke-width="1.15" fill="none"><path d="M3 0V7.5M3 9.5V12M8 0V2.5M8 4.5V12M13 0V7.5M13 9.5V12"/><path d="M0.8 8.5H5.2M5.8 3.5H10.2M10.8 8.5H15.2" stroke-width="1.5"/></g></svg></div>
<div class="ab" style="left:50px;top:957px;width:50px;height:50px;border-radius:50%;background:#ffa500;box-shadow:0 2px 8px rgba(0,0,0,.35)"></div>
<svg style="left:60px;top:968px" width="31" height="28"><ellipse cx="15.5" cy="11" rx="14.5" ry="10" fill="#000"/><path d="M8 17L6 27L15 19Z" fill="#000"/></svg>
<div class="ab" style="left:0px;top:1032px;width:1921px;height:1px;background:#3a3a28"></div>
<div class="ab" style="left:1903px;top:121px;width:18px;height:912px;background:#424242"></div>
<div class="ab" style="left:1903px;top:121px;width:2px;height:912px;background:#303030"></div>
<div class="ab" style="left:1905px;top:138px;width:13px;height:769px;background:#686868"></div>
<div class="ab" style="left:1920px;top:121px;width:1px;height:912px;background:linear-gradient(#000 40%,#6b8a1a 75%,#b5d43a)"></div>
<svg style="left:1906px;top:125px" width="12" height="10"><path d="M2 8 L6 3 L10 8Z" fill="#8a8a8a"/></svg>
<svg style="left:1906px;top:1017px" width="12" height="10"><path d="M2 2 L6 7 L10 2Z" fill="#fff"/></svg>
</body></html>
